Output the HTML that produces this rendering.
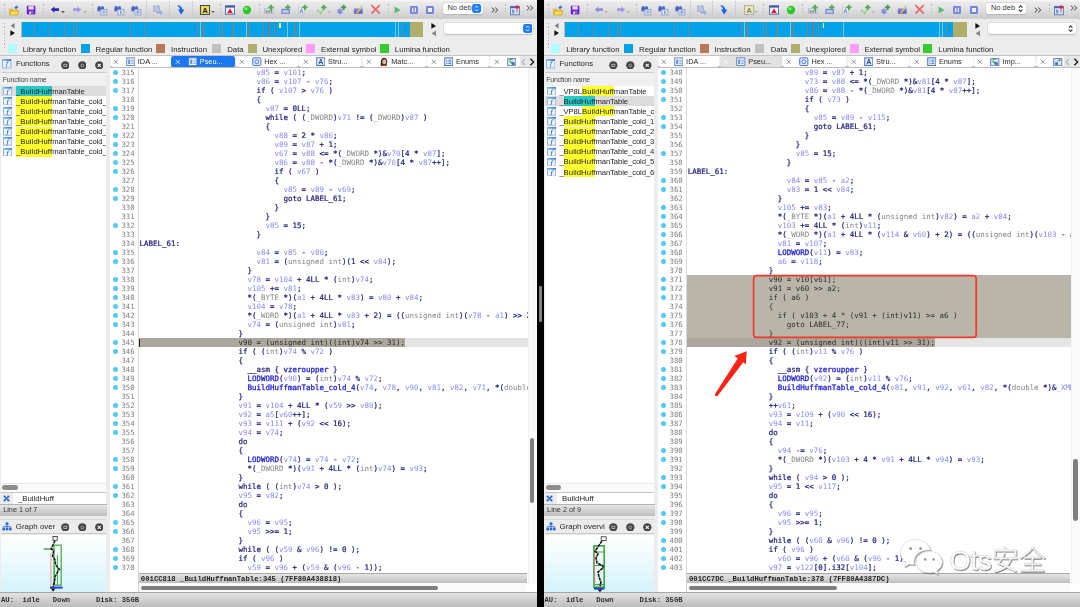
<!DOCTYPE html>
<html lang="en"><head><meta charset="utf-8"><title>IDA - BuildHuffmanTable diff</title>
<style>
*{box-sizing:border-box}
html,body{margin:0;padding:0}
html{background:#ececec}
body{width:1080px;height:607px;position:relative;overflow:hidden;background:#000;font-family:"Liberation Sans","Noto Sans CJK SC",sans-serif;-webkit-font-smoothing:antialiased}
.win{position:absolute;top:0;height:607px;overflow:hidden;background:#ececec}
.blur{filter:blur(.4px)}
.ab{position:absolute}
.ui,.lg,.fn,.tab{font-family:"Liberation Sans","Noto Sans CJK SC",sans-serif;white-space:nowrap}
.tbar{background:linear-gradient(#f7f7f7 0,#ebebeb 12%,#e3e3e3 40%,#d3d3d3 80%,#cbcbcb 94%,#d6d6d6 100%)}
.tri{width:0;height:0;border:2px solid transparent;border-top:2.4px solid #555;border-bottom:0}
.dd{background:#fff;border-radius:3px;box-shadow:0 0 0 .5px #d0d0d0,0 .6px 1px rgba(0,0,0,.25)}
.lg{font-size:7.8px;line-height:11px;color:#1e1e1e}
.fi{position:absolute;width:8.6px;height:8.2px;border:1px solid #5a8ae0;border-top:1.6px solid #3a70d8;background:#f4f8ff;overflow:hidden}
.fi.big{width:9.6px;height:9.6px}
.fi span{position:absolute;left:1.8px;top:-2.4px;font:italic 8px/10px "Liberation Serif",serif;color:#1a1a3a}
.fn{font-variant-ligatures:none;font-size:7.7px;line-height:10.1px;height:10.1px;color:#1c1c1c}
.fn{letter-spacing:-.1px}
.fn b{letter-spacing:.09px;font-weight:400;display:inline-block;height:10.1px;margin-top:-.5px;padding-top:.5px;vertical-align:top}
.tab{position:absolute;top:56px;height:10.9px;background:#fff;border-radius:2.5px;font-size:7.35px;line-height:10.8px;color:#2a2a2a}
.tab.act{background:#1b76f2;color:#fff}
.tab.dim{background:#e2e2e2;color:#2a2a2a}
.tab .tx{position:absolute;left:3.4px;top:2.9px;width:5.6px;height:5.6px}
.tab .tx path{stroke:#6e6e6e;stroke-width:.8;fill:none}
.tab.act .tx path,.tab.dim .tx path{stroke:#fff}
.tab .ti{position:absolute;left:16.4px;top:.7px;width:9.6px;height:9.4px}
.tab .tl{position:absolute;left:28.6px;top:1.1px}
pre{margin:0}
.ln{font:7.3px/9px "DejaVu Sans Mono","Liberation Mono",monospace;color:#7c7c7c}
.cd{font:7.475px/9px "DejaVu Sans Mono","Liberation Mono",monospace;color:#1c1c7c;font-weight:400;-webkit-text-stroke:.22px #1c1c7c}
.cd i{font-style:normal}
.cd .v{color:#8a8af4;-webkit-text-stroke:0}
.cd .t{color:#848484;-webkit-text-stroke:0}
.cd .f{color:#2222d8;-webkit-text-stroke:.3px #2222d8}
.cd .p{color:#2c2c2c;-webkit-text-stroke:0}
.dot{position:absolute;width:5.2px;height:5.2px;border-radius:50%;background:#50c8fa}
.st{font:700 7.27px/9px "Liberation Mono",monospace;color:#222;white-space:pre}
.sb{font:700 7.19px/10px "Liberation Mono",monospace;color:#303030}
.wm{position:absolute;left:0;top:0;width:1080px;height:607px;pointer-events:none}
</style></head>
<body>
<svg width="0" height="0" style="position:absolute"><defs><linearGradient id="fg" x1="0" x2="1" y1="0" y2="0"><stop offset="0" stop-color="#5cc4f6"/><stop offset="1" stop-color="#3a5ede"/></linearGradient></defs></svg>
<div class="win" style="left:0.0px;width:536.7px"><div class="blur ab" style="left:-4px;top:-4px;width:544.7px;height:615px"><div class="ab" style="left:4px;top:4px;width:536.7px;height:607px"><div class="ab tbar" style="left:0;top:0;width:100%;height:19px"></div><div class="ab" style="left:4.0px;top:4.4px;width:1.1px;height:1.3px;background:#b0b0b0"></div><div class="ab" style="left:4.0px;top:7.8px;width:1.1px;height:1.3px;background:#b0b0b0"></div><div class="ab" style="left:4.0px;top:11.2px;width:1.1px;height:1.3px;background:#b0b0b0"></div><div class="ab" style="left:43.0px;top:4.4px;width:1.1px;height:1.3px;background:#b0b0b0"></div><div class="ab" style="left:43.0px;top:7.8px;width:1.1px;height:1.3px;background:#b0b0b0"></div><div class="ab" style="left:43.0px;top:11.2px;width:1.1px;height:1.3px;background:#b0b0b0"></div><div class="ab" style="left:92.0px;top:4.4px;width:1.1px;height:1.3px;background:#b0b0b0"></div><div class="ab" style="left:92.0px;top:7.8px;width:1.1px;height:1.3px;background:#b0b0b0"></div><div class="ab" style="left:92.0px;top:11.2px;width:1.1px;height:1.3px;background:#b0b0b0"></div><div class="ab" style="left:219.5px;top:4.4px;width:1.1px;height:1.3px;background:#b0b0b0"></div><div class="ab" style="left:219.5px;top:7.8px;width:1.1px;height:1.3px;background:#b0b0b0"></div><div class="ab" style="left:219.5px;top:11.2px;width:1.1px;height:1.3px;background:#b0b0b0"></div><div class="ab" style="left:258.5px;top:4.4px;width:1.1px;height:1.3px;background:#b0b0b0"></div><div class="ab" style="left:258.5px;top:7.8px;width:1.1px;height:1.3px;background:#b0b0b0"></div><div class="ab" style="left:258.5px;top:11.2px;width:1.1px;height:1.3px;background:#b0b0b0"></div><div class="ab" style="left:387.5px;top:4.4px;width:1.1px;height:1.3px;background:#b0b0b0"></div><div class="ab" style="left:387.5px;top:7.8px;width:1.1px;height:1.3px;background:#b0b0b0"></div><div class="ab" style="left:387.5px;top:11.2px;width:1.1px;height:1.3px;background:#b0b0b0"></div><div class="ab" style="left:505.0px;top:4.4px;width:1.1px;height:1.3px;background:#b0b0b0"></div><div class="ab" style="left:505.0px;top:7.8px;width:1.1px;height:1.3px;background:#b0b0b0"></div><div class="ab" style="left:505.0px;top:11.2px;width:1.1px;height:1.3px;background:#b0b0b0"></div><div class="ab" style="left:146.4px;top:1.2px;width:1px;height:15.6px;background:repeating-linear-gradient(#c2c2c2 0 1.1px,transparent 1.1px 2.2px)"></div><div class="ab" style="left:168.8px;top:1.2px;width:1px;height:15.6px;background:repeating-linear-gradient(#c2c2c2 0 1.1px,transparent 1.1px 2.2px)"></div><div class="ab" style="left:191.6px;top:1.2px;width:1px;height:15.6px;background:repeating-linear-gradient(#c2c2c2 0 1.1px,transparent 1.1px 2.2px)"></div><svg class="ab" style="left:8.0px;top:4.0px" width="12" height="12" viewBox="0 0 12 12"><path d="M1.5 5.2h3l1 1h4.8v4.6h-8.8z" fill="#f0c030" stroke="#c89a10" stroke-width=".5"/><path d="M6 3.5l3-2 1.5 1.8-2.5 2z" fill="#4a78c8"/><path d="M1.5 10.8l1.6-3.6h8l-1.5 3.6z" fill="#ffdc50" stroke="#d0a010" stroke-width=".4"/></svg><svg class="ab" style="left:25.0px;top:4.0px" width="12" height="12" viewBox="0 0 12 12"><rect x="1.8" y="1.8" width="8.6" height="8.6" rx=".8" fill="#6a1ed0"/><rect x="3.4" y="2.2" width="5.4" height="3.4" fill="#e8d8ff"/><rect x="4" y="7.4" width="4.2" height="3" fill="#d0c0f0"/><rect x="6.4" y="7.9" width="1.2" height="2.1" fill="#5018a8"/></svg><svg class="ab" style="left:49.0px;top:4.0px" width="12" height="12" viewBox="0 0 12 12"><path d="M1.8 5.600l3.600-3.200v1.900h4.600v2.600h-4.600v1.900z" fill="#2a2ab8"/></svg><svg class="ab" style="left:71.0px;top:4.0px" width="12" height="12" viewBox="0 0 12 12"><path d="M10.2 5.600l-3.600-3.200v1.900h-4.600v2.600h4.600v1.900z" fill="#9a9ae8"/></svg><div class="ab tri" style="left:60.5px;top:11px;border-top-color:#555"></div><div class="ab tri" style="left:82.5px;top:11px;border-top-color:#b0b0b0"></div><svg class="ab" style="left:96.0px;top:4.0px" width="12" height="12" viewBox="0 0 12 12"><path d="M1.400 7.200V4.200Q1.400 2 3 2T4.600 3.400L5 3.400Q5.200 2 6.600 2T8 4.200V7.200H5.400V5.600H4.200V7.200Z" fill="#3f60c4"/><path d="M2 3.600Q2.200 2.600 3 2.600M5.800 3.600Q6 2.600 6.800 2.600" stroke="#8fb0f0" stroke-width=".7" fill="none"/><rect x="4.900" y="5.300" width="6" height="5.700" fill="#dde6f4" stroke="#7892c4" stroke-width=".7"/><path d="M6.400 7.300h3M6.400 8.900h3" stroke="#5a78b8" stroke-width=".7"/></svg><svg class="ab" style="left:113.0px;top:4.0px" width="12" height="12" viewBox="0 0 12 12"><path d="M1.400 7.200V4.200Q1.400 2 3 2T4.600 3.400L5 3.400Q5.200 2 6.600 2T8 4.200V7.200H5.400V5.600H4.200V7.200Z" fill="#3f60c4"/><path d="M2 3.600Q2.200 2.600 3 2.600M5.800 3.600Q6 2.600 6.800 2.600" stroke="#8fb0f0" stroke-width=".7" fill="none"/><rect x="4.900" y="5.300" width="6" height="5.700" fill="#dde6f4" stroke="#7892c4" stroke-width=".7"/><path d="M7.900 6.600v3.200" stroke="#4a68b0" stroke-width="1"/></svg><svg class="ab" style="left:130.0px;top:4.0px" width="12" height="12" viewBox="0 0 12 12"><path d="M1.400 7.200V4.200Q1.400 2 3 2T4.600 3.400L5 3.400Q5.200 2 6.600 2T8 4.200V7.200H5.400V5.600H4.200V7.200Z" fill="#3f60c4"/><path d="M2 3.600Q2.200 2.600 3 2.600M5.800 3.600Q6 2.600 6.800 2.600" stroke="#8fb0f0" stroke-width=".7" fill="none"/><rect x="4.900" y="5.300" width="6" height="5.700" fill="#dde6f4" stroke="#7892c4" stroke-width=".7"/><path d="M6.200 7.300h3.400M6.200 8.900h3.400M7.900 6.400v3.400" stroke="#5a78b8" stroke-width=".6"/></svg><svg class="ab" style="left:152.0px;top:4.0px" width="12" height="12" viewBox="0 0 12 12"><rect x="1.6" y="2" width="6" height="5.4" fill="#b8c4e0" stroke="#90a0c8" stroke-width=".6"/><path d="M4.6 7.8h3.6v-1.7l2.6 2.6-2.6 2.6v-1.7h-3.6z" fill="#9aa8d8"/></svg><svg class="ab" style="left:174.5px;top:4.0px" width="12" height="12" viewBox="0 0 12 12"><path d="M2.800 1.200Q6.800 1 7.200 5.600H9.400L6.200 10.400 3 5.600H5Q5 3 2.800 2.400Z" fill="#1464f2"/><path d="M3.200 1.600Q5.600 1.600 6.400 3.400" stroke="#5cc8f8" stroke-width=".8" fill="none"/></svg><svg class="ab" style="left:199.0px;top:4.0px" width="12" height="12" viewBox="0 0 12 12"><rect x="1.4" y="1.6" width="9.2" height="8.8" fill="#f0e040" stroke="#2a2a60" stroke-width=".9"/><text x="6" y="9" font-family="Liberation Sans,sans-serif" font-size="7.6" font-weight="700" text-anchor="middle" fill="#181860">A</text></svg><div class="ab tri" style="left:210.5px;top:11px;border-top-color:#666"></div><svg class="ab" style="left:224.0px;top:4.0px" width="12" height="12" viewBox="0 0 12 12"><rect x="1.4" y="1.8" width="9.2" height="8.4" fill="#f4f4ff" stroke="#3a58b0" stroke-width=".8"/><rect x="1.4" y="1.8" width="9.2" height="1.8" fill="#3a58b0"/><path d="M6 4.4l3 4.8h-6z" fill="#e02020"/></svg><svg class="ab" style="left:241.0px;top:4.0px" width="12" height="12" viewBox="0 0 12 12"><circle cx="6" cy="6" r="4.2" fill="#2ec82e"/><circle cx="4.9" cy="4.7" r="1.6" fill="#9af09a" opacity=".8"/></svg><svg class="ab" style="left:260px;top:0" width="145" height="19" viewBox="260 0 145 19"><rect x="264.8" y="8.6" width="8.200" height="5.200" fill="#e4e8ec" stroke="#9aa4b0" stroke-width=".5"/><path d="M266.200 10v3M268 10v3M269.800 10v3M271.600 10v3" stroke="#56606c" stroke-width=".8"/><path d="M271.0 4.7v5.400M268.3 7.4h5.400" stroke="#55a755" stroke-width="1.9"/><rect x="281.2" y="8.8" width="8.800" height="5.200" rx=".6" fill="#7c8cdc"/><rect x="282.6" y="10.2" width="6" height="2.600" fill="#c4ccf4"/><path d="M287.8 4.7v5.400M285.1 7.4h5.400" stroke="#55a755" stroke-width="1.9"/><rect x="298.4" y="7.2" width="6" height="6.600" fill="#eef0f8" stroke="#b4b8cc" stroke-width=".5"/><path d="M299.800 13l1.600-4.200 1.600 4.200M300.400 11.600h2" fill="none" stroke="#5a78c0" stroke-width=".8"/><path d="M304.8 4.7v5.400M302.1 7.4h5.400" stroke="#55a755" stroke-width="1.9"/><path d="M317.400 10.600l3 2.400 3-3.400M320.400 13l.4 1.200" fill="none" stroke="#9ccc8c" stroke-width="1.200"/><circle cx="317.600" cy="10.600" r="1" fill="#9ccc8c"/><circle cx="320.600" cy="13.200" r="1.100" fill="#9ccc8c"/><path d="M323.8 4.7v5.400M321.1 7.4h5.400" stroke="#55a755" stroke-width="1.9"/><path d="M340 7.600l1 2.100 2.300-.2-1.300 1.900 1.300 1.900-2.300-.2-1 2.100-1-2.100-2.300.2 1.300-1.900-1.300-1.900 2.300.2z" fill="#8c88e4"/><path d="M343.6 4.7v5.400M340.9 7.4h5.400" stroke="#459a4c" stroke-width="1.9"/><rect x="353.8" y="8.4" width="9" height="5.600" rx=".6" fill="#7480d4"/><rect x="355" y="11.4" width="6.600" height="1.800" fill="#5a64c0"/><path d="M356.400 12.200l4.600-6 1.300 1-4.600 6-1.700.6z" fill="#f0bc58"/><path d="M361 6.200l.8-1 1.300 1-.8 1z" fill="#8ad0e8"/><path d="M371.400 5.200l8.400 8.400M379.800 5.200l-8.400 8.400" stroke="#e26a6a" stroke-width="1.700"/><path d="M394.600 6.400l6 3.500-6 3.500z" fill="#5cba70"/></svg><div class="ab tri" style="left:327.400px;top:11px;border-top-color:#b4b4b4"></div><svg class="ab" style="left:407.5px;top:4.0px" width="12" height="12" viewBox="0 0 12 12"><rect x="2" y="2" width="8" height="8" rx="1.2" fill="#7686e0"/><rect x="4" y="3.800" width="1.300" height="4.400" fill="#e8ecff"/><rect x="6.700" y="3.800" width="1.300" height="4.400" fill="#e8ecff"/></svg><svg class="ab" style="left:424.0px;top:4.0px" width="12" height="12" viewBox="0 0 12 12"><rect x="2" y="2" width="8" height="8" rx="1.2" fill="#7686e0"/><rect x="4" y="4" width="4" height="4" fill="#eef0ff"/></svg><div class="ab dd" style="left:442.8px;top:3.3px;width:39.8px;height:10.6px"><span style="position:absolute;left:4.6px;top:0;line-height:10.8px;font-size:7.5px;color:#3a3a3a">No deb</span><svg class="ab" style="left:29.6px;top:0.8px" width="9.2" height="9.0" viewBox="0 0 10 10"><rect width="10" height="10" rx="2.4" fill="#1a7af8"/><path d="M3.2 4L5 2.2 6.8 4M3.2 6L5 7.8 6.8 6" fill="none" stroke="#fff" stroke-width="1.1"/></svg></div><svg class="ab" style="left:490.6px;top:6.6px" width="8" height="6" viewBox="0 0 8 6"><path d="M.8.600L3.400 3 .8 5.400M4.200.6L6.800 3 4.200 5.400" fill="none" stroke="#3c3c3c" stroke-width="1"/></svg><svg class="ab" style="left:526.2px;top:4.8px" width="8" height="6" viewBox="0 0 8 6"><path d="M.8.600L3.400 3 .8 5.400M4.200.6L6.800 3 4.200 5.400" fill="none" stroke="#3c3c3c" stroke-width="1"/></svg><svg class="ab" style="left:509.0px;top:4.0px" width="12" height="12" viewBox="0 0 12 12"><rect x="1.4" y="2.4" width="9" height="8.4" fill="#dce6fa" stroke="#4a68b8" stroke-width=".8"/><rect x="1.4" y="2.4" width="9" height="1.8" fill="#4a68b8"/><rect x="3" y="5.6" width="2.4" height="3.8" fill="#7a94d8"/><circle cx="8" cy="3" r="1.7" fill="#e02828"/><path d="M8 4.6v4" stroke="#e02828" stroke-width=".8"/></svg><div class="ab" style="left:4px;top:23px;width:1.1px;height:27px;background:repeating-linear-gradient(#b0b0b0 0 1.3px,transparent 1.3px 3.4px)"></div><div class="ab" style="left:10px;top:23px;font-size:0"><svg width="6" height="14" viewBox="0 0 6 14"><path d="M4.600 0v5.600L.4 2.800z" fill="#858585"/><path d="M.4 7.200v5.800L5 10.100z" fill="#111"/></svg></div><div class="ab" style="left:21.8px;top:21.9px;width:401.4px;height:14.8px;background:#00a2e8;overflow:hidden"><div class="ab" style="left:12.4px;top:0;width:0.8px;height:14.8px;background:#6a8a98"></div><div class="ab" style="left:27.7px;top:0;width:0.8px;height:14.8px;background:#6a8a98"></div><div class="ab" style="left:42.4px;top:0;width:0.8px;height:14.8px;background:#6a8a98"></div><div class="ab" style="left:51.0px;top:0;width:0.8px;height:14.8px;background:#6a8a98"></div><div class="ab" style="left:54.4px;top:0;width:0.8px;height:14.8px;background:#6a8a98"></div><div class="ab" style="left:109.4px;top:0;width:0.8px;height:14.8px;background:#6a8a98"></div><div class="ab" style="left:122.4px;top:0;width:0.8px;height:14.8px;background:#6a8a98"></div><div class="ab" style="left:175.0px;top:0;width:0.8px;height:14.8px;background:#6a8a98"></div><div class="ab" style="left:178.0px;top:0;width:0.8px;height:14.8px;background:#7ac8ec"></div><div class="ab" style="left:181.4px;top:0;width:1.0px;height:14.8px;background:#a87858"></div><div class="ab" style="left:196.8px;top:0;width:0.8px;height:14.8px;background:#6a8a98"></div><div class="ab" style="left:200.4px;top:0;width:0.8px;height:14.8px;background:#6a8a98"></div><div class="ab" style="left:211.6px;top:0;width:1.0px;height:14.8px;background:#a87858"></div><div class="ab" style="left:224.0px;top:0;width:0.8px;height:14.8px;background:#7ac8ec"></div><div class="ab" style="left:227.4px;top:0;width:1.0px;height:14.8px;background:#a87858"></div><div class="ab" style="left:241.4px;top:0;width:0.8px;height:14.8px;background:#6a8a98"></div><div class="ab" style="left:246.0px;top:0;width:1.0px;height:14.8px;background:#c06040"></div><div class="ab" style="left:252.4px;top:0;width:0.8px;height:14.8px;background:#6a8a98"></div><div class="ab" style="left:265.6px;top:0;width:0.8px;height:14.8px;background:#7ac8ec"></div><div class="ab" style="left:272.0px;top:0;width:0.8px;height:14.8px;background:#a87858"></div><div class="ab" style="left:277.6px;top:0;width:0.8px;height:14.8px;background:#7ac8ec"></div><div class="ab" style="left:373.0px;top:0;width:0.8px;height:14.8px;background:#7ac8ec"></div><div class="ab" style="left:376.0px;top:0;width:0.8px;height:14.8px;background:#7ac8ec"></div><div class="ab" style="left:379.8px;top:0;width:0.8px;height:14.8px;background:#6a8a98"></div><div class="ab" style="left:387.8px;top:0;width:13.6px;height:14.8px;background:#b0ae6a"></div><div class="ab" style="left:257.6px;top:1px;width:1.4px;height:5.6px;background:#f4f060"></div></div><div class="ab" style="left:20.8px;top:21.9px;width:1px;height:14.8px;background:#b8b8b8"></div><div class="ab" style="left:431px;top:23px;font-size:0"><svg width="6" height="14" viewBox="0 0 6 14"><path d="M.4 0v5.800l4.600-2.900z" fill="#111"/><path d="M5 7.600v5.600L.6 10.400z" fill="#858585"/></svg></div><div class="ab dd" style="left:444.4px;top:23.2px;width:88.4px;height:11.3px"><svg class="ab" style="left:78.4px;top:1.1px" width="9.2" height="9.0" viewBox="0 0 10 10"><rect width="10" height="10" rx="2.4" fill="#1a7af8"/><path d="M3.2 4L5 2.2 6.8 4M3.2 6L5 7.8 6.8 6" fill="none" stroke="#fff" stroke-width="1.1"/></svg></div><div class="ab" style="left:7.8px;top:44.4px;width:9.1px;height:8.9px;background:#aefcff"></div><div class="ab lg" style="left:22.7px;top:43.6px">Library function</div><div class="ab" style="left:80.8px;top:44.4px;width:9.1px;height:8.9px;background:#00a2e8"></div><div class="ab lg" style="left:95.6px;top:43.6px">Regular function</div><div class="ab" style="left:156.3px;top:44.4px;width:9.1px;height:8.9px;background:#b8785a"></div><div class="ab lg" style="left:171.0px;top:43.6px">Instruction</div><div class="ab" style="left:211.8px;top:44.4px;width:9.1px;height:8.9px;background:#c0c0c0"></div><div class="ab lg" style="left:227.2px;top:43.6px">Data</div><div class="ab" style="left:247.6px;top:44.4px;width:9.1px;height:8.9px;background:#b0ae6a"></div><div class="ab lg" style="left:262.4px;top:43.6px">Unexplored</div><div class="ab" style="left:306.0px;top:44.4px;width:9.1px;height:8.9px;background:#ff9cf8"></div><div class="ab lg" style="left:321.0px;top:43.6px">External symbol</div><div class="ab" style="left:379.8px;top:44.4px;width:9.1px;height:8.9px;background:#32cc32"></div><div class="ab lg" style="left:394.8px;top:43.6px">Lumina function</div><div class="ab" style="left:0;top:54.6px;width:100%;height:1px;background:#c4c4c4"></div><div class="ab" style="left:0;top:55.6px;width:106.2px;height:536.4px;background:#ececec"></div><div class="ab" style="left:1px;top:56px;width:105.2px;height:16px;background:#ebebeb"></div><svg class="ab" style="left:2.3px;top:59.3px" width="9.4" height="9.4" viewBox="0 0 10 10" preserveAspectRatio="none"><rect x=".5" y=".5" width="9" height="9" fill="#e6f6ff" stroke="#8fa8ee" stroke-width="1"/><rect x=".4" y=".2" width="9.200" height="1.700" fill="url(#fg)"/><text x="5.2" y="7.700" text-anchor="middle" font-family="DejaVu Serif,Liberation Serif,serif" font-style="italic" font-size="6.800" fill="#2c3858">f</text></svg><div class="ab ui" style="left:15.9px;top:58.3px;font-size:7.8px;line-height:11px;color:#262626">Functions</div><svg class="ab" style="left:60.7px;top:60.6px" width="8.6" height="8.6" viewBox="0 0 8 8"><circle cx="4" cy="4" r="3.85" fill="#444"/><rect x="2.6" y="3" width="2.8" height="2" fill="none" stroke="#c8c8c8" stroke-width=".7"/></svg><svg class="ab" style="left:77.7px;top:60.6px" width="8.6" height="8.6" viewBox="0 0 8 8"><circle cx="4" cy="4" r="3.85" fill="#444"/><circle cx="4" cy="4.2" r="1.3" fill="none" stroke="#c0c0c0" stroke-width=".7"/></svg><svg class="ab" style="left:94.7px;top:60.6px" width="8.6" height="8.6" viewBox="0 0 8 8"><circle cx="4" cy="4" r="3.85" fill="#444"/><path d="M2.6 2.6L5.4 5.4M5.4 2.6L2.6 5.4" stroke="#f4f4f4" stroke-width="1.1"/></svg><div class="ab" style="left:1px;top:72.4px;width:105.2px;height:13.6px;background:#f0f0f0;border-top:1.2px solid #cdcdcd"></div><div class="ab ui" style="left:2.8px;top:75px;font-size:7px;letter-spacing:-.2px;line-height:10px;color:#4a4a4a">Function name</div><div class="ab" style="left:1px;top:86px;width:105.2px;height:397px;background:#fff;overflow:hidden"><div class="ab" style="left:0;top:0.00px;width:100%;height:10.1px;background:#dcdcdc"></div><svg class="ab" style="left:2.2px;top:0.8px" width="9.2" height="8.6" viewBox="0 0 10 10" preserveAspectRatio="none"><rect x=".5" y=".5" width="9" height="9" fill="#e6f6ff" stroke="#8fa8ee" stroke-width="1"/><rect x=".4" y=".2" width="9.200" height="1.700" fill="url(#fg)"/><text x="5.2" y="7.700" text-anchor="middle" font-family="DejaVu Serif,Liberation Serif,serif" font-style="italic" font-size="6.800" fill="#2c3858">f</text></svg><div class="ab fn" style="left:14.9px;top:0.50px"><b style="background:#28c8c8">_BuildHuff</b>manTable</div><svg class="ab" style="left:2.2px;top:10.9px" width="9.2" height="8.6" viewBox="0 0 10 10" preserveAspectRatio="none"><rect x=".5" y=".5" width="9" height="9" fill="#e6f6ff" stroke="#8fa8ee" stroke-width="1"/><rect x=".4" y=".2" width="9.200" height="1.700" fill="url(#fg)"/><text x="5.2" y="7.700" text-anchor="middle" font-family="DejaVu Serif,Liberation Serif,serif" font-style="italic" font-size="6.800" fill="#2c3858">f</text></svg><div class="ab fn" style="left:14.9px;top:10.62px"><b style="background:#ffff30">_BuildHuff</b>manTable_cold_1</div><svg class="ab" style="left:2.2px;top:21.1px" width="9.2" height="8.6" viewBox="0 0 10 10" preserveAspectRatio="none"><rect x=".5" y=".5" width="9" height="9" fill="#e6f6ff" stroke="#8fa8ee" stroke-width="1"/><rect x=".4" y=".2" width="9.200" height="1.700" fill="url(#fg)"/><text x="5.2" y="7.700" text-anchor="middle" font-family="DejaVu Serif,Liberation Serif,serif" font-style="italic" font-size="6.800" fill="#2c3858">f</text></svg><div class="ab fn" style="left:14.9px;top:20.75px"><b style="background:#ffff30">_BuildHuff</b>manTable_cold_2</div><svg class="ab" style="left:2.2px;top:31.2px" width="9.2" height="8.6" viewBox="0 0 10 10" preserveAspectRatio="none"><rect x=".5" y=".5" width="9" height="9" fill="#e6f6ff" stroke="#8fa8ee" stroke-width="1"/><rect x=".4" y=".2" width="9.200" height="1.700" fill="url(#fg)"/><text x="5.2" y="7.700" text-anchor="middle" font-family="DejaVu Serif,Liberation Serif,serif" font-style="italic" font-size="6.800" fill="#2c3858">f</text></svg><div class="ab fn" style="left:14.9px;top:30.88px"><b style="background:#ffff30">_BuildHuff</b>manTable_cold_3</div><svg class="ab" style="left:2.2px;top:41.3px" width="9.2" height="8.6" viewBox="0 0 10 10" preserveAspectRatio="none"><rect x=".5" y=".5" width="9" height="9" fill="#e6f6ff" stroke="#8fa8ee" stroke-width="1"/><rect x=".4" y=".2" width="9.200" height="1.700" fill="url(#fg)"/><text x="5.2" y="7.700" text-anchor="middle" font-family="DejaVu Serif,Liberation Serif,serif" font-style="italic" font-size="6.800" fill="#2c3858">f</text></svg><div class="ab fn" style="left:14.9px;top:41.00px"><b style="background:#ffff30">_BuildHuff</b>manTable_cold_4</div><svg class="ab" style="left:2.2px;top:51.4px" width="9.2" height="8.6" viewBox="0 0 10 10" preserveAspectRatio="none"><rect x=".5" y=".5" width="9" height="9" fill="#e6f6ff" stroke="#8fa8ee" stroke-width="1"/><rect x=".4" y=".2" width="9.200" height="1.700" fill="url(#fg)"/><text x="5.2" y="7.700" text-anchor="middle" font-family="DejaVu Serif,Liberation Serif,serif" font-style="italic" font-size="6.800" fill="#2c3858">f</text></svg><div class="ab fn" style="left:14.9px;top:51.12px"><b style="background:#ffff30">_BuildHuff</b>manTable_cold_5</div><svg class="ab" style="left:2.2px;top:61.5px" width="9.2" height="8.6" viewBox="0 0 10 10" preserveAspectRatio="none"><rect x=".5" y=".5" width="9" height="9" fill="#e6f6ff" stroke="#8fa8ee" stroke-width="1"/><rect x=".4" y=".2" width="9.200" height="1.700" fill="url(#fg)"/><text x="5.2" y="7.700" text-anchor="middle" font-family="DejaVu Serif,Liberation Serif,serif" font-style="italic" font-size="6.800" fill="#2c3858">f</text></svg><div class="ab fn" style="left:14.9px;top:61.25px"><b style="background:#ffff30">_BuildHuff</b>manTable_cold_6</div></div><div class="ab" style="left:1px;top:483px;width:105.2px;height:8.6px;background:#fafafa;border-top:1px solid #e8e8e8"></div><div class="ab" style="left:2.4px;top:485.4px;width:15.6px;height:4.6px;border-radius:2.3px;background:#8e8e8e"></div><div class="ab" style="left:1px;top:491.8px;width:105.2px;height:12.4px;background:#ececec;border-top:1px solid #c4c4c4"></div><svg class="ab" style="left:2.6px;top:494.8px" width="7" height="7" viewBox="0 0 8 8"><path d="M2 2l4 4M6 2L2 6" stroke="#2a6ae0" stroke-width="1.600"/><circle cx="1.800" cy="1.800" r="1.300" fill="#2a6ae0"/><circle cx="6.200" cy="1.800" r="1.300" fill="#2a6ae0"/><circle cx="1.800" cy="6.200" r="1.300" fill="#2a6ae0"/><circle cx="6.200" cy="6.200" r="1.300" fill="#2a6ae0"/></svg><div class="ab" style="left:13.4px;top:493px;width:92.8px;height:10.6px;background:#fff"></div><div class="ab ui" style="left:18.0px;top:493.6px;font-size:7.8px;line-height:10px;color:#222">_BuildHuff</div><div class="ab" style="left:0;top:504.4px;width:107.2px;height:11.6px;background:linear-gradient(#e6e6e6,#bebebe);border-top:1px solid #b4b4b4"></div><div class="ab ui" style="left:3.2px;top:505.2px;font-size:7.3px;line-height:10px;color:#333">Line 1 of 7</div><div class="ab" style="left:1px;top:518.6px;width:105.2px;height:15.2px;background:#ebebeb;border-bottom:1px solid #c8c8c8;border-top:1px solid #d8d8d8"></div><svg class="ab" style="left:2.2px;top:521.6px" width="10" height="9" viewBox="0 0 10 9"><rect x="3.6" y=".4" width="2.8" height="2.6" fill="#2a6ae0"/><rect x=".4" y="5.6" width="2.6" height="2.8" fill="#2a6ae0"/><rect x="3.7" y="5.6" width="2.6" height="2.8" fill="#2a6ae0"/><rect x="7" y="5.6" width="2.6" height="2.8" fill="#2a6ae0"/><path d="M5 3v1.4M1.7 5.6V4.4h6.6v1.2M5 4.4v1.2" stroke="#2a6ae0" stroke-width=".8" fill="none"/></svg><div class="ab ui" style="left:15.8px;top:520.8px;width:39.5px;overflow:hidden;white-space:nowrap;font-size:7.9px;line-height:11px;color:#262626">Graph overview</div><svg class="ab" style="left:60.7px;top:522.7px" width="8.6" height="8.6" viewBox="0 0 8 8"><circle cx="4" cy="4" r="3.85" fill="#444"/><rect x="2.6" y="3" width="2.8" height="2" fill="none" stroke="#c8c8c8" stroke-width=".7"/></svg><svg class="ab" style="left:77.7px;top:522.7px" width="8.6" height="8.6" viewBox="0 0 8 8"><circle cx="4" cy="4" r="3.85" fill="#444"/><circle cx="4" cy="4.2" r="1.3" fill="none" stroke="#c0c0c0" stroke-width=".7"/></svg><svg class="ab" style="left:94.7px;top:522.7px" width="8.6" height="8.6" viewBox="0 0 8 8"><circle cx="4" cy="4" r="3.85" fill="#444"/><path d="M2.6 2.6L5.4 5.4M5.4 2.6L2.6 5.4" stroke="#f4f4f4" stroke-width="1.1"/></svg><div class="ab" style="left:1px;top:534.8px;width:105.2px;height:57.2px;background:linear-gradient(#ffffff,#d4f3fc)"></div><svg class="ab" style="left:30px;top:530px" width="60" height="62" viewBox="30 530 60 62"><rect x="54" y="545.2" width="7.2" height="40" fill="none" stroke="#4cac4c" stroke-width="1.3"/><path d="M57.4 555v30M54.600 567v18" stroke="#4cac4c" stroke-width="1"/><path d="M43.6 549h10" stroke="#4cac4c" stroke-width="1.5"/><path d="M50.9 553.400v33" stroke="#ee8080" stroke-width=".8"/><path d="M55 540.6l-3.800 8.200 2.400 2.200-1 5 2.400 4 .6 5 3.800 4-2.400 4-2 4-.6 5-1.400 5" fill="none" stroke="#141414" stroke-width="1.5" stroke-dasharray="3.2 .7"/><rect x="53" y="536.5" width="4.200" height="3.800" fill="#fff" stroke="#2a2a2a" stroke-width=".8"/><path d="M50 587.600h12.600" stroke="#2a36e4" stroke-width="2"/><path d="M50.800 588.600h4.600l-2.300 3.200z" fill="#0c0c0c"/></svg><div class="ab" style="left:109.6px;top:55.6px;width:427.1px;height:536.4px;background:#fff"></div><div class="ab" style="left:109.6px;top:55.6px;width:427.1px;height:11.8px;background:#f1f1f1;border-bottom:1px solid #bdbdbd"></div><div class="ab" style="left:520.4px;top:55.6px;width:16.5px;height:11.4px;background:#e7e7e7"></div><div class="tab" style="left:110.8px;width:59.8px"><div class="ab" style="left:-1.6px;top:0"><svg class="tx" viewBox="0 0 6 6"><path d="M.8.8l4.400 4.400M5.200.8L.8 5.200"/></svg><svg class="ti" width="9" height="9" viewBox="0 0 9 9"><rect x=".6" y=".8" width="7.8" height="7.4" fill="#eef4ff" stroke="#4a78c8" stroke-width=".8"/><rect x="2" y="2.4" width="2" height="4.4" fill="#6a90d8"/><path d="M5 3h2.4M5 4.6h2.4M5 6.2h2.4" stroke="#6a90d8" stroke-width=".7"/></svg><span class="tl">IDA ...</span></div></div><div class="tab act" style="left:171.2px;width:63.4px"><div class="ab" style="left:0.0px;top:0"><svg class="tx" viewBox="0 0 6 6"><path d="M.8.8l4.400 4.400M5.200.8L.8 5.200"/></svg><svg class="ti" width="9" height="9" viewBox="0 0 9 9"><rect x=".6" y=".8" width="7.8" height="7.4" fill="#eef4ff" stroke="#4a78c8" stroke-width=".8"/><rect x="2" y="2.4" width="2" height="4.4" fill="#6a90d8"/><path d="M5 3h2.4M5 4.6h2.4M5 6.2h2.4" stroke="#6a90d8" stroke-width=".7"/></svg><span class="tl">Pseu...</span></div></div><div class="tab" style="left:235.6px;width:62.6px"><div class="ab" style="left:0.0px;top:0"><svg class="tx" viewBox="0 0 6 6"><path d="M.8.8l4.400 4.400M5.200.8L.8 5.200"/></svg><svg class="ti" width="9" height="9" viewBox="0 0 9 9"><rect x=".6" y=".8" width="7.8" height="7.4" rx="1" fill="#e4ecff" stroke="#3a68d8" stroke-width=".9"/><circle cx="4.5" cy="4.5" r="1.9" fill="none" stroke="#3a68d8" stroke-width=".8"/></svg><span class="tl">Hex ...</span></div></div><div class="tab" style="left:299.4px;width:62.0px"><div class="ab" style="left:0.0px;top:0"><svg class="tx" viewBox="0 0 6 6"><path d="M.8.8l4.400 4.400M5.200.8L.8 5.200"/></svg><svg class="ti" width="9" height="9" viewBox="0 0 9 9"><rect x=".6" y=".8" width="7.8" height="7.4" fill="#e8f0ff" stroke="#3a68c8" stroke-width=".9"/><path d="M2.6 7l1.9-5 1.9 5M3.3 5.4h2.4" fill="none" stroke="#2a3a80" stroke-width=".9"/></svg><span class="tl">Stru...</span></div></div><div class="tab" style="left:362.6px;width:63.6px"><div class="ab" style="left:0.0px;top:0"><svg class="tx" viewBox="0 0 6 6"><path d="M.8.8l4.400 4.400M5.200.8L.8 5.200"/></svg><svg class="ti" width="9" height="9" viewBox="0 0 9 9"><path d="M1.6 9V5.4C1.6 2.6 3 .8 4.8.8s3 1.6 3 4L7 9z" fill="#3a2a24"/><ellipse cx="5" cy="4.6" rx="1.9" ry="2.4" fill="#e8b8a0"/><path d="M3 7.4h4V9H3z" fill="#c03030"/></svg><span class="tl">Matc...</span></div></div><div class="tab" style="left:427.4px;width:61.8px"><div class="ab" style="left:0.0px;top:0"><svg class="tx" viewBox="0 0 6 6"><path d="M.8.8l4.400 4.400M5.200.8L.8 5.200"/></svg><svg class="ti" width="9" height="9" viewBox="0 0 9 9"><rect x=".6" y=".8" width="7.8" height="7.4" fill="#e8f0ff" stroke="#3a68c8" stroke-width=".9"/><path d="M2.2 3h1M4.2 3h2.6M2.2 4.6h1M4.2 4.6h2.6M2.2 6.2h1M4.2 6.2h2.6" stroke="#3a68c8" stroke-width=".8"/></svg><span class="tl">Enums</span></div></div><div class="tab" style="left:490.4px;width:30.0px"><div class="ab" style="left:0.0px;top:0"><svg class="tx" viewBox="0 0 6 6"><path d="M.8.8l4.400 4.400M5.200.8L.8 5.200"/></svg><svg class="ti" width="9" height="9" viewBox="0 0 9 9"><rect x=".6" y="1.6" width="7.8" height="6.8" fill="#dce6fa" stroke="#4a68b8" stroke-width=".8"/><path d="M2 2.6h3.4L4 .8z" fill="#38a838"/><path d="M2.4 3.4l2 2.4 1-1" stroke="#38a838" stroke-width="1.1" fill="none"/><rect x="4.6" y="5" width="2.6" height="2.6" fill="#4a68b8"/></svg><span class="tl"></span></div></div><div class="ab" style="left:110.2px;top:66.9px;width:426.5px;height:1.1px;background:#bcbcbc"></div><svg class="ab" style="left:520.2px;top:58px" width="16" height="8" viewBox="0 0 16 8"><path d="M5 1L2 4l3 3" fill="none" stroke="#b0b0b0" stroke-width="1.1"/><path d="M10.4 .8L13.6 4l-3.2 3.2" fill="none" stroke="#1a1a1a" stroke-width="1.4"/></svg><div class="ab" style="left:109.6px;top:67.6px;width:418.5px;height:505.4px;overflow:hidden"><div class="ab" style="left:28.0px;top:0;width:1.4px;height:100%;background:#dadada"></div><div class="ab" style="left:29.4px;top:270.8px;width:265.8px;height:8.8px;background:#aca79c"></div><div class="ab" style="left:295.2px;top:270.8px;width:123.2px;height:8.8px;background:#e4e4e4"></div><div class="ab" style="left:29.2px;top:271.0px;width:1.1px;height:8.4px;background:#1a1a1a"></div><pre class="ab ln" style="left:11.8px;top:0.3px">315
316
317
318
319
320
321
322
323
324
325
326
327
328
329
330
331
332
333
334
335
336
337
338
339
340
341
342
343
344
345
346
347
348
349
350
351
352
353
354
355
356
357
358
359
360
361
362
363
364
365
366
367
368
369
370</pre><div class="dot" style="left:3.2px;top:2.3px"></div><div class="dot" style="left:3.2px;top:11.3px"></div><div class="dot" style="left:3.2px;top:20.3px"></div><div class="dot" style="left:3.2px;top:38.3px"></div><div class="dot" style="left:3.2px;top:47.3px"></div><div class="dot" style="left:3.2px;top:65.3px"></div><div class="dot" style="left:3.2px;top:74.3px"></div><div class="dot" style="left:3.2px;top:83.3px"></div><div class="dot" style="left:3.2px;top:92.3px"></div><div class="dot" style="left:3.2px;top:101.3px"></div><div class="dot" style="left:3.2px;top:119.3px"></div><div class="dot" style="left:3.2px;top:128.3px"></div><div class="dot" style="left:3.2px;top:155.3px"></div><div class="dot" style="left:3.2px;top:182.3px"></div><div class="dot" style="left:3.2px;top:191.3px"></div><div class="dot" style="left:3.2px;top:209.3px"></div><div class="dot" style="left:3.2px;top:218.3px"></div><div class="dot" style="left:3.2px;top:227.3px"></div><div class="dot" style="left:3.2px;top:236.3px"></div><div class="dot" style="left:3.2px;top:245.3px"></div><div class="dot" style="left:3.2px;top:254.3px"></div><div class="dot" style="left:3.2px;top:272.3px"></div><div class="dot" style="left:3.2px;top:281.3px"></div><div class="dot" style="left:3.2px;top:299.3px"></div><div class="dot" style="left:3.2px;top:308.3px"></div><div class="dot" style="left:3.2px;top:317.3px"></div><div class="dot" style="left:3.2px;top:335.3px"></div><div class="dot" style="left:3.2px;top:344.3px"></div><div class="dot" style="left:3.2px;top:353.3px"></div><div class="dot" style="left:3.2px;top:362.3px"></div><div class="dot" style="left:3.2px;top:389.3px"></div><div class="dot" style="left:3.2px;top:398.3px"></div><div class="dot" style="left:3.2px;top:416.3px"></div><div class="dot" style="left:3.2px;top:425.3px"></div><div class="dot" style="left:3.2px;top:452.3px"></div><div class="dot" style="left:3.2px;top:461.3px"></div><div class="dot" style="left:3.2px;top:479.3px"></div><div class="dot" style="left:3.2px;top:488.3px"></div><div class="dot" style="left:3.2px;top:497.3px"></div><pre class="ab cd" style="left:30.0px;top:0.3px">                          <i class="v">v85</i> = <i class="v">v101</i>;
                          <i class="v">v86</i> = <i class="v">v107</i> - <i class="v">v76</i>;
                          if ( <i class="v">v107</i> &gt; <i class="v">v76</i> )
                          {
                            <i class="v">v87</i> = 0LL;
                            while ( (<i class="t">_DWORD</i>)<i class="v">v71</i> != (<i class="t">_DWORD</i>)<i class="v">v87</i> )
                            {
                              <i class="v">v88</i> = 2 * <i class="v">v86</i>;
                              <i class="v">v89</i> = <i class="v">v87</i> + 1;
                              <i class="v">v67</i> = <i class="v">v88</i> &lt;= *(<i class="t">_DWORD</i> *)&amp;<i class="v">v70</i>[4 * <i class="v">v87</i>];
                              <i class="v">v86</i> = <i class="v">v88</i> - *(<i class="t">_DWORD</i> *)&amp;<i class="v">v70</i>[4 * <i class="v">v87</i>++];
                              if ( <i class="v">v67</i> )
                              {
                                <i class="v">v85</i> = <i class="v">v89</i> - <i class="v">v69</i>;
                                goto LABEL_61;
                              }
                            }
                            <i class="v">v85</i> = 15;
                          }
LABEL_61:
                          <i class="v">v84</i> = <i class="v">v85</i> - <i class="v">v80</i>;
                          <i class="v">v81</i> = (<i class="t">unsigned int</i>)(1 &lt;&lt; <i class="v">v84</i>);
                        }
                        <i class="v">v78</i> = <i class="v">v104</i> + 4LL * (<i class="t">int</i>)<i class="v">v74</i>;
                        <i class="v">v105</i> += <i class="v">v81</i>;
                        *(<i class="t">_BYTE</i> *)(<i class="v">a1</i> + 4LL * <i class="v">v83</i>) = <i class="v">v80</i> + <i class="v">v84</i>;
                        <i class="v">v104</i> = <i class="v">v78</i>;
                        *(<i class="t">_WORD</i> *)(<i class="v">a1</i> + 4LL * <i class="v">v83</i> + 2) = ((<i class="t">unsigned int</i>)(<i class="v">v78</i> - <i class="v">a1</i>) &gt;&gt; 2
                        <i class="v">v74</i> = (<i class="t">unsigned int</i>)<i class="v">v81</i>;
                      }
<i class="p">                      v90 = (unsigned int)((int)v74 &gt;&gt; 31);</i>
                      if ( (<i class="t">int</i>)<i class="v">v74</i> % <i class="v">v72</i> )
                      {
                        __asm { <i class="f">vzeroupper</i> }
                        <i class="f">LODWORD</i>(<i class="v">v90</i>) = (<i class="t">int</i>)<i class="v">v74</i> % <i class="v">v72</i>;
                        <i class="f">BuildHuffmanTable_cold_4</i>(<i class="v">v74</i>, <i class="v">v78</i>, <i class="v">v90</i>, <i class="v">v81</i>, <i class="v">v82</i>, <i class="v">v71</i>, *(<i class="t">double</i>
                      }
                      <i class="v">v91</i> = <i class="v">v104</i> + 4LL * (<i class="v">v59</i> &gt;&gt; <i class="v">v80</i>);
                      <i class="v">v92</i> = <i class="v">a5</i>[<i class="v">v60</i>++];
                      <i class="v">v93</i> = <i class="v">v111</i> + (<i class="v">v92</i> &lt;&lt; 16);
                      <i class="v">v94</i> = <i class="v">v74</i>;
                      do
                      {
                        <i class="f">LODWORD</i>(<i class="v">v74</i>) = <i class="v">v74</i> - <i class="v">v72</i>;
                        *(<i class="t">_DWORD</i> *)(<i class="v">v91</i> + 4LL * (<i class="t">int</i>)<i class="v">v74</i>) = <i class="v">v93</i>;
                      }
                      while ( (<i class="t">int</i>)<i class="v">v74</i> &gt; 0 );
                      <i class="v">v95</i> = <i class="v">v82</i>;
                      do
                      {
                        <i class="v">v96</i> = <i class="v">v95</i>;
                        <i class="v">v95</i> &gt;&gt;= 1;
                      }
                      while ( (<i class="v">v59</i> &amp; <i class="v">v96</i>) != 0 );
                      if ( <i class="v">v96</i> )
                        <i class="v">v59</i> = <i class="v">v96</i> + (<i class="v">v59</i> &amp; (<i class="v">v96</i> - 1));</pre></div><div class="ab" style="left:527.5px;top:67.6px;width:9.2px;height:516px;background:#fafafa;border-left:1px solid #f2f2f2"></div><div class="ab" style="left:529.7px;top:438.0px;width:4.8px;height:64.6px;border-radius:2.4px;background:#7e7e7e"></div><div class="ab" style="left:139.0px;top:573px;width:388.1px;height:9.6px;background:linear-gradient(#e6e6e6,#bebebe);border-top:1px solid #a8a8a8"></div><div class="ab st" style="left:140.8px;top:574.5px">001CC818 _BuildHuffmanTable:345 (7FF80A438818)</div><div class="ab" style="left:138.0px;top:573px;width:1px;height:19px;background:#d0d0d0"></div><div class="ab" style="left:139.0px;top:583.4px;width:388.1px;height:8.6px;background:#fafafa"></div><div class="ab" style="left:140.8px;top:585.6px;width:296.8px;height:4.6px;border-radius:2.3px;background:#7e7e7e"></div><div class="ab" style="left:0;top:592px;width:100%;height:15px;background:linear-gradient(#e2e2e2,#bcbcbc);border-top:1px solid #a6a6a6"></div><pre class="ab sb" style="left:1px;top:595.2px">AU:  idle   Down      Disk: 35GB</pre></div></div></div>
<div class="win" style="left:543.5px;width:536.5px"><div class="blur ab" style="left:-4px;top:-4px;width:544.5px;height:615px"><div class="ab" style="left:4px;top:4px;width:536.5px;height:607px"><div class="ab tbar" style="left:0;top:0;width:100%;height:19px"></div><div class="ab" style="left:4.0px;top:4.4px;width:1.1px;height:1.3px;background:#b0b0b0"></div><div class="ab" style="left:4.0px;top:7.8px;width:1.1px;height:1.3px;background:#b0b0b0"></div><div class="ab" style="left:4.0px;top:11.2px;width:1.1px;height:1.3px;background:#b0b0b0"></div><div class="ab" style="left:43.0px;top:4.4px;width:1.1px;height:1.3px;background:#b0b0b0"></div><div class="ab" style="left:43.0px;top:7.8px;width:1.1px;height:1.3px;background:#b0b0b0"></div><div class="ab" style="left:43.0px;top:11.2px;width:1.1px;height:1.3px;background:#b0b0b0"></div><div class="ab" style="left:92.0px;top:4.4px;width:1.1px;height:1.3px;background:#b0b0b0"></div><div class="ab" style="left:92.0px;top:7.8px;width:1.1px;height:1.3px;background:#b0b0b0"></div><div class="ab" style="left:92.0px;top:11.2px;width:1.1px;height:1.3px;background:#b0b0b0"></div><div class="ab" style="left:219.5px;top:4.4px;width:1.1px;height:1.3px;background:#b0b0b0"></div><div class="ab" style="left:219.5px;top:7.8px;width:1.1px;height:1.3px;background:#b0b0b0"></div><div class="ab" style="left:219.5px;top:11.2px;width:1.1px;height:1.3px;background:#b0b0b0"></div><div class="ab" style="left:258.5px;top:4.4px;width:1.1px;height:1.3px;background:#b0b0b0"></div><div class="ab" style="left:258.5px;top:7.8px;width:1.1px;height:1.3px;background:#b0b0b0"></div><div class="ab" style="left:258.5px;top:11.2px;width:1.1px;height:1.3px;background:#b0b0b0"></div><div class="ab" style="left:387.5px;top:4.4px;width:1.1px;height:1.3px;background:#b0b0b0"></div><div class="ab" style="left:387.5px;top:7.8px;width:1.1px;height:1.3px;background:#b0b0b0"></div><div class="ab" style="left:387.5px;top:11.2px;width:1.1px;height:1.3px;background:#b0b0b0"></div><div class="ab" style="left:505.0px;top:4.4px;width:1.1px;height:1.3px;background:#b0b0b0"></div><div class="ab" style="left:505.0px;top:7.8px;width:1.1px;height:1.3px;background:#b0b0b0"></div><div class="ab" style="left:505.0px;top:11.2px;width:1.1px;height:1.3px;background:#b0b0b0"></div><div class="ab" style="left:146.4px;top:1.2px;width:1px;height:15.6px;background:repeating-linear-gradient(#c2c2c2 0 1.1px,transparent 1.1px 2.2px)"></div><div class="ab" style="left:168.8px;top:1.2px;width:1px;height:15.6px;background:repeating-linear-gradient(#c2c2c2 0 1.1px,transparent 1.1px 2.2px)"></div><div class="ab" style="left:191.6px;top:1.2px;width:1px;height:15.6px;background:repeating-linear-gradient(#c2c2c2 0 1.1px,transparent 1.1px 2.2px)"></div><svg class="ab" style="left:8.0px;top:4.0px" width="12" height="12" viewBox="0 0 12 12"><path d="M1.5 5.2h3l1 1h4.8v4.6h-8.8z" fill="#f0c030" stroke="#c89a10" stroke-width=".5"/><path d="M6 3.5l3-2 1.5 1.8-2.5 2z" fill="#4a78c8"/><path d="M1.5 10.8l1.6-3.6h8l-1.5 3.6z" fill="#ffdc50" stroke="#d0a010" stroke-width=".4"/></svg><svg class="ab" style="left:25.0px;top:4.0px" width="12" height="12" viewBox="0 0 12 12"><rect x="1.8" y="1.8" width="8.6" height="8.6" rx=".8" fill="#6a1ed0"/><rect x="3.4" y="2.2" width="5.4" height="3.4" fill="#e8d8ff"/><rect x="4" y="7.4" width="4.2" height="3" fill="#d0c0f0"/><rect x="6.4" y="7.9" width="1.2" height="2.1" fill="#5018a8"/></svg><svg class="ab" style="left:49.0px;top:4.0px" width="12" height="12" viewBox="0 0 12 12"><path d="M1.8 5.600l3.600-3.200v1.900h4.600v2.600h-4.600v1.900z" fill="#8f8fe0"/></svg><svg class="ab" style="left:71.0px;top:4.0px" width="12" height="12" viewBox="0 0 12 12"><path d="M10.2 5.600l-3.600-3.200v1.900h-4.600v2.600h4.600v1.900z" fill="#9a9ae8"/></svg><div class="ab tri" style="left:60.5px;top:11px;border-top-color:#b0b0b0"></div><div class="ab tri" style="left:82.5px;top:11px;border-top-color:#b0b0b0"></div><svg class="ab" style="left:96.0px;top:4.0px" width="12" height="12" viewBox="0 0 12 12"><path d="M1.400 7.200V4.200Q1.400 2 3 2T4.600 3.400L5 3.400Q5.200 2 6.600 2T8 4.200V7.200H5.400V5.600H4.200V7.200Z" fill="#3f60c4"/><path d="M2 3.600Q2.200 2.600 3 2.600M5.800 3.600Q6 2.600 6.800 2.600" stroke="#8fb0f0" stroke-width=".7" fill="none"/><rect x="4.900" y="5.300" width="6" height="5.700" fill="#dde6f4" stroke="#7892c4" stroke-width=".7"/><path d="M6.400 7.300h3M6.400 8.900h3" stroke="#5a78b8" stroke-width=".7"/></svg><svg class="ab" style="left:113.0px;top:4.0px" width="12" height="12" viewBox="0 0 12 12"><path d="M1.400 7.200V4.200Q1.400 2 3 2T4.600 3.400L5 3.400Q5.200 2 6.600 2T8 4.200V7.200H5.400V5.600H4.200V7.200Z" fill="#3f60c4"/><path d="M2 3.600Q2.200 2.600 3 2.600M5.800 3.600Q6 2.600 6.800 2.600" stroke="#8fb0f0" stroke-width=".7" fill="none"/><rect x="4.900" y="5.300" width="6" height="5.700" fill="#dde6f4" stroke="#7892c4" stroke-width=".7"/><path d="M7.900 6.600v3.200" stroke="#4a68b0" stroke-width="1"/></svg><svg class="ab" style="left:130.0px;top:4.0px" width="12" height="12" viewBox="0 0 12 12"><path d="M1.400 7.200V4.200Q1.400 2 3 2T4.600 3.400L5 3.400Q5.200 2 6.600 2T8 4.200V7.200H5.400V5.600H4.200V7.200Z" fill="#3f60c4"/><path d="M2 3.600Q2.200 2.600 3 2.600M5.800 3.600Q6 2.600 6.800 2.600" stroke="#8fb0f0" stroke-width=".7" fill="none"/><rect x="4.900" y="5.300" width="6" height="5.700" fill="#dde6f4" stroke="#7892c4" stroke-width=".7"/><path d="M6.200 7.300h3.400M6.200 8.900h3.400M7.900 6.400v3.400" stroke="#5a78b8" stroke-width=".6"/></svg><svg class="ab" style="left:152.0px;top:4.0px" width="12" height="12" viewBox="0 0 12 12"><rect x="1.6" y="2" width="6" height="5.4" fill="#b8c4e0" stroke="#90a0c8" stroke-width=".6"/><path d="M4.6 7.8h3.6v-1.7l2.6 2.6-2.6 2.6v-1.7h-3.6z" fill="#9aa8d8"/></svg><svg class="ab" style="left:174.5px;top:4.0px" width="12" height="12" viewBox="0 0 12 12"><path d="M2.800 1.200Q6.800 1 7.200 5.600H9.400L6.200 10.400 3 5.600H5Q5 3 2.800 2.400Z" fill="#1464f2"/><path d="M3.200 1.600Q5.600 1.600 6.400 3.400" stroke="#5cc8f8" stroke-width=".8" fill="none"/></svg><svg class="ab" style="left:199.0px;top:4.0px" width="12" height="12" viewBox="0 0 12 12"><rect x="1.4" y="1.6" width="9.2" height="8.8" fill="#f0ee9a" stroke="#a4a4b8" stroke-width=".9"/><text x="6" y="9" font-family="Liberation Sans,sans-serif" font-size="7.6" font-weight="700" text-anchor="middle" fill="#7c7cb0">A</text></svg><div class="ab tri" style="left:210.5px;top:11px;border-top-color:#b0b0b0"></div><svg class="ab" style="left:224.0px;top:4.0px" width="12" height="12" viewBox="0 0 12 12"><rect x="1.4" y="1.8" width="9.2" height="8.4" fill="#f4f4ff" stroke="#3a58b0" stroke-width=".8"/><rect x="1.4" y="1.8" width="9.2" height="1.8" fill="#3a58b0"/><path d="M6 4.4l3 4.8h-6z" fill="#e02020"/></svg><svg class="ab" style="left:241.0px;top:4.0px" width="12" height="12" viewBox="0 0 12 12"><circle cx="6" cy="6" r="4.2" fill="#2ec82e"/><circle cx="4.9" cy="4.7" r="1.6" fill="#9af09a" opacity=".8"/></svg><svg class="ab" style="left:260px;top:0" width="145" height="19" viewBox="260 0 145 19"><rect x="264.8" y="8.6" width="8.200" height="5.200" fill="#e4e8ec" stroke="#9aa4b0" stroke-width=".5"/><path d="M266.200 10v3M268 10v3M269.800 10v3M271.600 10v3" stroke="#56606c" stroke-width=".8"/><path d="M271.0 4.7v5.400M268.3 7.4h5.400" stroke="#55a755" stroke-width="1.9"/><rect x="281.2" y="8.8" width="8.800" height="5.200" rx=".6" fill="#7c8cdc"/><rect x="282.6" y="10.2" width="6" height="2.600" fill="#c4ccf4"/><path d="M287.8 4.7v5.400M285.1 7.4h5.400" stroke="#55a755" stroke-width="1.9"/><rect x="298.4" y="7.2" width="6" height="6.600" fill="#eef0f8" stroke="#b4b8cc" stroke-width=".5"/><path d="M299.800 13l1.600-4.200 1.600 4.200M300.400 11.600h2" fill="none" stroke="#5a78c0" stroke-width=".8"/><path d="M304.8 4.7v5.400M302.1 7.4h5.400" stroke="#55a755" stroke-width="1.9"/><path d="M317.400 10.600l3 2.400 3-3.400M320.400 13l.4 1.200" fill="none" stroke="#9ccc8c" stroke-width="1.200"/><circle cx="317.600" cy="10.600" r="1" fill="#9ccc8c"/><circle cx="320.600" cy="13.200" r="1.100" fill="#9ccc8c"/><path d="M323.8 4.7v5.400M321.1 7.4h5.400" stroke="#55a755" stroke-width="1.9"/><path d="M340 7.600l1 2.100 2.300-.2-1.300 1.900 1.300 1.900-2.300-.2-1 2.100-1-2.100-2.300.2 1.300-1.900-1.300-1.900 2.300.2z" fill="#8c88e4"/><path d="M343.6 4.7v5.400M340.9 7.4h5.400" stroke="#459a4c" stroke-width="1.9"/><rect x="353.8" y="8.4" width="9" height="5.600" rx=".6" fill="#7480d4"/><rect x="355" y="11.4" width="6.600" height="1.800" fill="#5a64c0"/><path d="M356.400 12.200l4.600-6 1.300 1-4.600 6-1.700.6z" fill="#f0bc58"/><path d="M361 6.200l.8-1 1.300 1-.8 1z" fill="#8ad0e8"/><path d="M371.400 5.200l8.400 8.400M379.800 5.200l-8.400 8.400" stroke="#e26a6a" stroke-width="1.700"/><path d="M394.600 6.400l6 3.500-6 3.500z" fill="#5cba70"/></svg><div class="ab tri" style="left:327.400px;top:11px;border-top-color:#b4b4b4"></div><svg class="ab" style="left:407.5px;top:4.0px" width="12" height="12" viewBox="0 0 12 12"><rect x="2" y="2" width="8" height="8" rx="1.2" fill="#7686e0"/><rect x="4" y="3.800" width="1.300" height="4.400" fill="#e8ecff"/><rect x="6.700" y="3.800" width="1.300" height="4.400" fill="#e8ecff"/></svg><svg class="ab" style="left:424.0px;top:4.0px" width="12" height="12" viewBox="0 0 12 12"><rect x="2" y="2" width="8" height="8" rx="1.2" fill="#7686e0"/><rect x="4" y="4" width="4" height="4" fill="#eef0ff"/></svg><div class="ab dd" style="left:442.8px;top:3.3px;width:39.8px;height:10.6px"><span style="position:absolute;left:4.6px;top:0;line-height:10.8px;font-size:7.5px;color:#3a3a3a">No deb</span><svg class="ab" style="left:29.6px;top:0.8px" width="9.2" height="9.0" viewBox="0 0 10 10"><path d="M3 4L5 2 7 4M3 6.200L5 8.200 7 6.200" fill="none" stroke="#3c3c3c" stroke-width="1.300"/></svg></div><svg class="ab" style="left:490.6px;top:6.6px" width="8" height="6" viewBox="0 0 8 6"><path d="M.8.600L3.400 3 .8 5.400M4.200.6L6.800 3 4.200 5.400" fill="none" stroke="#3c3c3c" stroke-width="1"/></svg><svg class="ab" style="left:526.2px;top:4.8px" width="8" height="6" viewBox="0 0 8 6"><path d="M.8.600L3.400 3 .8 5.400M4.200.6L6.800 3 4.200 5.400" fill="none" stroke="#3c3c3c" stroke-width="1"/></svg><svg class="ab" style="left:509.0px;top:4.0px" width="12" height="12" viewBox="0 0 12 12"><rect x="1.4" y="2.4" width="9" height="8.4" fill="#dce6fa" stroke="#4a68b8" stroke-width=".8"/><rect x="1.4" y="2.4" width="9" height="1.8" fill="#4a68b8"/><rect x="3" y="5.6" width="2.4" height="3.8" fill="#7a94d8"/><circle cx="8" cy="3" r="1.7" fill="#e02828"/><path d="M8 4.6v4" stroke="#e02828" stroke-width=".8"/></svg><div class="ab" style="left:4px;top:23px;width:1.1px;height:27px;background:repeating-linear-gradient(#b0b0b0 0 1.3px,transparent 1.3px 3.4px)"></div><div class="ab" style="left:10px;top:23px;font-size:0"><svg width="6" height="14" viewBox="0 0 6 14"><path d="M4.600 0v5.600L.4 2.800z" fill="#858585"/><path d="M.4 7.200v5.800L5 10.100z" fill="#111"/></svg></div><div class="ab" style="left:21.8px;top:21.9px;width:401.4px;height:14.8px;background:#00a2e8;overflow:hidden"><div class="ab" style="left:12.9px;top:0;width:0.8px;height:14.8px;background:#6a8a98"></div><div class="ab" style="left:28.2px;top:0;width:0.8px;height:14.8px;background:#6a8a98"></div><div class="ab" style="left:42.9px;top:0;width:0.8px;height:14.8px;background:#6a8a98"></div><div class="ab" style="left:51.5px;top:0;width:0.8px;height:14.8px;background:#6a8a98"></div><div class="ab" style="left:54.9px;top:0;width:0.8px;height:14.8px;background:#6a8a98"></div><div class="ab" style="left:109.9px;top:0;width:0.8px;height:14.8px;background:#6a8a98"></div><div class="ab" style="left:122.9px;top:0;width:0.8px;height:14.8px;background:#6a8a98"></div><div class="ab" style="left:175.5px;top:0;width:0.8px;height:14.8px;background:#6a8a98"></div><div class="ab" style="left:178.5px;top:0;width:0.8px;height:14.8px;background:#7ac8ec"></div><div class="ab" style="left:181.9px;top:0;width:1.0px;height:14.8px;background:#a87858"></div><div class="ab" style="left:197.3px;top:0;width:0.8px;height:14.8px;background:#6a8a98"></div><div class="ab" style="left:200.9px;top:0;width:0.8px;height:14.8px;background:#6a8a98"></div><div class="ab" style="left:212.1px;top:0;width:1.0px;height:14.8px;background:#a87858"></div><div class="ab" style="left:224.5px;top:0;width:0.8px;height:14.8px;background:#7ac8ec"></div><div class="ab" style="left:227.9px;top:0;width:1.0px;height:14.8px;background:#a87858"></div><div class="ab" style="left:241.9px;top:0;width:0.8px;height:14.8px;background:#6a8a98"></div><div class="ab" style="left:246.5px;top:0;width:1.0px;height:14.8px;background:#c06040"></div><div class="ab" style="left:252.9px;top:0;width:0.8px;height:14.8px;background:#6a8a98"></div><div class="ab" style="left:278.1px;top:0;width:0.8px;height:14.8px;background:#7ac8ec"></div><div class="ab" style="left:373.5px;top:0;width:0.8px;height:14.8px;background:#7ac8ec"></div><div class="ab" style="left:376.5px;top:0;width:0.8px;height:14.8px;background:#7ac8ec"></div><div class="ab" style="left:380.3px;top:0;width:0.8px;height:14.8px;background:#6a8a98"></div><div class="ab" style="left:387.8px;top:0;width:13.6px;height:14.8px;background:#b0ae6a"></div><div class="ab" style="left:257.6px;top:1px;width:1.4px;height:5.6px;background:#f4f060"></div></div><div class="ab" style="left:20.8px;top:21.9px;width:1px;height:14.8px;background:#b8b8b8"></div><div class="ab" style="left:431px;top:23px;font-size:0"><svg width="6" height="14" viewBox="0 0 6 14"><path d="M.4 0v5.800l4.600-2.900z" fill="#111"/><path d="M5 7.600v5.600L.6 10.400z" fill="#858585"/></svg></div><div class="ab dd" style="left:444.4px;top:23.2px;width:88.4px;height:11.3px"><svg class="ab" style="left:78.4px;top:1.1px" width="9.2" height="9.0" viewBox="0 0 10 10"><path d="M3 4L5 2 7 4M3 6.200L5 8.200 7 6.200" fill="none" stroke="#3c3c3c" stroke-width="1.300"/></svg></div><div class="ab" style="left:7.8px;top:44.4px;width:9.1px;height:8.9px;background:#aefcff"></div><div class="ab lg" style="left:22.7px;top:43.6px">Library function</div><div class="ab" style="left:80.8px;top:44.4px;width:9.1px;height:8.9px;background:#00a2e8"></div><div class="ab lg" style="left:95.6px;top:43.6px">Regular function</div><div class="ab" style="left:156.3px;top:44.4px;width:9.1px;height:8.9px;background:#b8785a"></div><div class="ab lg" style="left:171.0px;top:43.6px">Instruction</div><div class="ab" style="left:211.8px;top:44.4px;width:9.1px;height:8.9px;background:#c0c0c0"></div><div class="ab lg" style="left:227.2px;top:43.6px">Data</div><div class="ab" style="left:247.6px;top:44.4px;width:9.1px;height:8.9px;background:#b0ae6a"></div><div class="ab lg" style="left:262.4px;top:43.6px">Unexplored</div><div class="ab" style="left:306.0px;top:44.4px;width:9.1px;height:8.9px;background:#ff9cf8"></div><div class="ab lg" style="left:321.0px;top:43.6px">External symbol</div><div class="ab" style="left:379.8px;top:44.4px;width:9.1px;height:8.9px;background:#32cc32"></div><div class="ab lg" style="left:394.8px;top:43.6px">Lumina function</div><div class="ab" style="left:0;top:54.6px;width:100%;height:1px;background:#c4c4c4"></div><div class="ab" style="left:0;top:55.6px;width:110.8px;height:536.4px;background:#ececec"></div><div class="ab" style="left:1px;top:56px;width:109.8px;height:16px;background:#ebebeb"></div><svg class="ab" style="left:2.3px;top:59.3px" width="9.4" height="9.4" viewBox="0 0 10 10" preserveAspectRatio="none"><rect x=".5" y=".5" width="9" height="9" fill="#e6f6ff" stroke="#8fa8ee" stroke-width="1"/><rect x=".4" y=".2" width="9.200" height="1.700" fill="url(#fg)"/><text x="5.2" y="7.700" text-anchor="middle" font-family="DejaVu Serif,Liberation Serif,serif" font-style="italic" font-size="6.800" fill="#2c3858">f</text></svg><div class="ab ui" style="left:15.9px;top:58.3px;font-size:7.8px;line-height:11px;color:#262626">Functions</div><svg class="ab" style="left:65.5px;top:60.6px" width="8.6" height="8.6" viewBox="0 0 8 8"><circle cx="4" cy="4" r="3.85" fill="#444"/><rect x="2.6" y="3" width="2.8" height="2" fill="none" stroke="#c8c8c8" stroke-width=".7"/></svg><svg class="ab" style="left:82.5px;top:60.6px" width="8.6" height="8.6" viewBox="0 0 8 8"><circle cx="4" cy="4" r="3.85" fill="#444"/><circle cx="4" cy="4.2" r="1.3" fill="none" stroke="#c0c0c0" stroke-width=".7"/></svg><svg class="ab" style="left:99.5px;top:60.6px" width="8.6" height="8.6" viewBox="0 0 8 8"><circle cx="4" cy="4" r="3.85" fill="#444"/><path d="M2.6 2.6L5.4 5.4M5.4 2.6L2.6 5.4" stroke="#f4f4f4" stroke-width="1.1"/></svg><div class="ab" style="left:1px;top:72.4px;width:109.8px;height:13.6px;background:#f0f0f0;border-top:1.2px solid #cdcdcd"></div><div class="ab ui" style="left:2.8px;top:75px;font-size:7px;letter-spacing:-.2px;line-height:10px;color:#4a4a4a">Function name</div><div class="ab" style="left:1px;top:86px;width:109.8px;height:397px;background:#fff;overflow:hidden"><svg class="ab" style="left:2.2px;top:0.8px" width="9.2" height="8.6" viewBox="0 0 10 10" preserveAspectRatio="none"><rect x=".5" y=".5" width="9" height="9" fill="#e6f6ff" stroke="#8fa8ee" stroke-width="1"/><rect x=".4" y=".2" width="9.200" height="1.700" fill="url(#fg)"/><text x="5.2" y="7.700" text-anchor="middle" font-family="DejaVu Serif,Liberation Serif,serif" font-style="italic" font-size="6.800" fill="#2c3858">f</text></svg><div class="ab fn" style="left:14.9px;top:0.50px">_VP8L<b style="background:#ffff30">BuildHuff</b>manTable</div><div class="ab" style="left:0;top:10.12px;width:100%;height:10.1px;background:#dcdcdc"></div><svg class="ab" style="left:2.2px;top:10.9px" width="9.2" height="8.6" viewBox="0 0 10 10" preserveAspectRatio="none"><rect x=".5" y=".5" width="9" height="9" fill="#e6f6ff" stroke="#8fa8ee" stroke-width="1"/><rect x=".4" y=".2" width="9.200" height="1.700" fill="url(#fg)"/><text x="5.2" y="7.700" text-anchor="middle" font-family="DejaVu Serif,Liberation Serif,serif" font-style="italic" font-size="6.800" fill="#2c3858">f</text></svg><div class="ab fn" style="left:14.9px;top:10.62px">_<b style="background:#28c8c8">BuildHuff</b>manTable</div><svg class="ab" style="left:2.2px;top:21.1px" width="9.2" height="8.6" viewBox="0 0 10 10" preserveAspectRatio="none"><rect x=".5" y=".5" width="9" height="9" fill="#e6f6ff" stroke="#8fa8ee" stroke-width="1"/><rect x=".4" y=".2" width="9.200" height="1.700" fill="url(#fg)"/><text x="5.2" y="7.700" text-anchor="middle" font-family="DejaVu Serif,Liberation Serif,serif" font-style="italic" font-size="6.800" fill="#2c3858">f</text></svg><div class="ab fn" style="left:14.9px;top:20.75px">_VP8L<b style="background:#ffff30">BuildHuff</b>manTable_cold_1</div><svg class="ab" style="left:2.2px;top:31.2px" width="9.2" height="8.6" viewBox="0 0 10 10" preserveAspectRatio="none"><rect x=".5" y=".5" width="9" height="9" fill="#e6f6ff" stroke="#8fa8ee" stroke-width="1"/><rect x=".4" y=".2" width="9.200" height="1.700" fill="url(#fg)"/><text x="5.2" y="7.700" text-anchor="middle" font-family="DejaVu Serif,Liberation Serif,serif" font-style="italic" font-size="6.800" fill="#2c3858">f</text></svg><div class="ab fn" style="left:14.9px;top:30.88px">_<b style="background:#ffff30">BuildHuff</b>manTable_cold_1</div><svg class="ab" style="left:2.2px;top:41.3px" width="9.2" height="8.6" viewBox="0 0 10 10" preserveAspectRatio="none"><rect x=".5" y=".5" width="9" height="9" fill="#e6f6ff" stroke="#8fa8ee" stroke-width="1"/><rect x=".4" y=".2" width="9.200" height="1.700" fill="url(#fg)"/><text x="5.2" y="7.700" text-anchor="middle" font-family="DejaVu Serif,Liberation Serif,serif" font-style="italic" font-size="6.800" fill="#2c3858">f</text></svg><div class="ab fn" style="left:14.9px;top:41.00px">_<b style="background:#ffff30">BuildHuff</b>manTable_cold_2</div><svg class="ab" style="left:2.2px;top:51.4px" width="9.2" height="8.6" viewBox="0 0 10 10" preserveAspectRatio="none"><rect x=".5" y=".5" width="9" height="9" fill="#e6f6ff" stroke="#8fa8ee" stroke-width="1"/><rect x=".4" y=".2" width="9.200" height="1.700" fill="url(#fg)"/><text x="5.2" y="7.700" text-anchor="middle" font-family="DejaVu Serif,Liberation Serif,serif" font-style="italic" font-size="6.800" fill="#2c3858">f</text></svg><div class="ab fn" style="left:14.9px;top:51.12px">_<b style="background:#ffff30">BuildHuff</b>manTable_cold_3</div><svg class="ab" style="left:2.2px;top:61.5px" width="9.2" height="8.6" viewBox="0 0 10 10" preserveAspectRatio="none"><rect x=".5" y=".5" width="9" height="9" fill="#e6f6ff" stroke="#8fa8ee" stroke-width="1"/><rect x=".4" y=".2" width="9.200" height="1.700" fill="url(#fg)"/><text x="5.2" y="7.700" text-anchor="middle" font-family="DejaVu Serif,Liberation Serif,serif" font-style="italic" font-size="6.800" fill="#2c3858">f</text></svg><div class="ab fn" style="left:14.9px;top:61.25px">_<b style="background:#ffff30">BuildHuff</b>manTable_cold_4</div><svg class="ab" style="left:2.2px;top:71.7px" width="9.2" height="8.6" viewBox="0 0 10 10" preserveAspectRatio="none"><rect x=".5" y=".5" width="9" height="9" fill="#e6f6ff" stroke="#8fa8ee" stroke-width="1"/><rect x=".4" y=".2" width="9.200" height="1.700" fill="url(#fg)"/><text x="5.2" y="7.700" text-anchor="middle" font-family="DejaVu Serif,Liberation Serif,serif" font-style="italic" font-size="6.800" fill="#2c3858">f</text></svg><div class="ab fn" style="left:14.9px;top:71.38px">_<b style="background:#ffff30">BuildHuff</b>manTable_cold_5</div><svg class="ab" style="left:2.2px;top:81.8px" width="9.2" height="8.6" viewBox="0 0 10 10" preserveAspectRatio="none"><rect x=".5" y=".5" width="9" height="9" fill="#e6f6ff" stroke="#8fa8ee" stroke-width="1"/><rect x=".4" y=".2" width="9.200" height="1.700" fill="url(#fg)"/><text x="5.2" y="7.700" text-anchor="middle" font-family="DejaVu Serif,Liberation Serif,serif" font-style="italic" font-size="6.800" fill="#2c3858">f</text></svg><div class="ab fn" style="left:14.9px;top:81.50px">_<b style="background:#ffff30">BuildHuff</b>manTable_cold_6</div></div><div class="ab" style="left:1px;top:483px;width:109.8px;height:8.6px;background:#fafafa;border-top:1px solid #e8e8e8"></div><div class="ab" style="left:2.4px;top:485.4px;width:15.6px;height:4.6px;border-radius:2.3px;background:#8e8e8e"></div><div class="ab" style="left:1px;top:491.8px;width:109.8px;height:12.4px;background:#ececec;border-top:1px solid #c4c4c4"></div><svg class="ab" style="left:2.6px;top:494.8px" width="7" height="7" viewBox="0 0 8 8"><path d="M2 2l4 4M6 2L2 6" stroke="#2a6ae0" stroke-width="1.600"/><circle cx="1.800" cy="1.800" r="1.300" fill="#2a6ae0"/><circle cx="6.200" cy="1.800" r="1.300" fill="#2a6ae0"/><circle cx="1.800" cy="6.200" r="1.300" fill="#2a6ae0"/><circle cx="6.200" cy="6.200" r="1.300" fill="#2a6ae0"/></svg><div class="ab" style="left:13.4px;top:493px;width:97.4px;height:10.6px;background:#fff"></div><div class="ab ui" style="left:18.6px;top:493.6px;font-size:7.8px;line-height:10px;color:#222">BuildHuff</div><div class="ab" style="left:0;top:504.4px;width:111.8px;height:11.6px;background:linear-gradient(#e6e6e6,#bebebe);border-top:1px solid #b4b4b4"></div><div class="ab ui" style="left:3.6px;top:505.2px;font-size:7.3px;line-height:10px;color:#333">Line 2 of 9</div><div class="ab" style="left:1px;top:518.6px;width:109.8px;height:15.2px;background:#ebebeb;border-bottom:1px solid #c8c8c8;border-top:1px solid #d8d8d8"></div><svg class="ab" style="left:2.6px;top:521.6px" width="10" height="9" viewBox="0 0 10 9"><rect x="3.6" y=".4" width="2.8" height="2.6" fill="#2a6ae0"/><rect x=".4" y="5.6" width="2.6" height="2.8" fill="#2a6ae0"/><rect x="3.7" y="5.6" width="2.6" height="2.8" fill="#2a6ae0"/><rect x="7" y="5.6" width="2.6" height="2.8" fill="#2a6ae0"/><path d="M5 3v1.4M1.7 5.6V4.4h6.6v1.2M5 4.4v1.2" stroke="#2a6ae0" stroke-width=".8" fill="none"/></svg><div class="ab ui" style="left:16.0px;top:520.8px;width:45.0px;overflow:hidden;white-space:nowrap;font-size:7.9px;line-height:11px;color:#262626">Graph overview</div><svg class="ab" style="left:65.5px;top:522.7px" width="8.6" height="8.6" viewBox="0 0 8 8"><circle cx="4" cy="4" r="3.85" fill="#444"/><rect x="2.6" y="3" width="2.8" height="2" fill="none" stroke="#c8c8c8" stroke-width=".7"/></svg><svg class="ab" style="left:82.5px;top:522.7px" width="8.6" height="8.6" viewBox="0 0 8 8"><circle cx="4" cy="4" r="3.85" fill="#444"/><circle cx="4" cy="4.2" r="1.3" fill="none" stroke="#c0c0c0" stroke-width=".7"/></svg><svg class="ab" style="left:99.5px;top:522.7px" width="8.6" height="8.6" viewBox="0 0 8 8"><circle cx="4" cy="4" r="3.85" fill="#444"/><path d="M2.6 2.6L5.4 5.4M5.4 2.6L2.6 5.4" stroke="#f4f4f4" stroke-width="1.1"/></svg><div class="ab" style="left:1px;top:534.8px;width:109.8px;height:57.2px;background:linear-gradient(#ffffff,#d4f3fc)"></div><svg class="ab" style="left:31.5px;top:530px" width="60" height="62" viewBox="575 530 60 62"><rect x="594" y="545.8" width="10.200" height="41.400" fill="none" stroke="#3ea63e" stroke-width="1.6"/><path d="M594 552h10M594 565.5h10M594 584.600h10" stroke="#3ea63e" stroke-width="1.2"/><path d="M594.600 553v32" stroke="#ee7070" stroke-width=".8"/><path d="M602 541l-5.500 8-1.500 2 3 3-2 4 1 5 6 3v2l-5 4 1 5 2 5-1 4" fill="none" stroke="#141414" stroke-width="1.6" stroke-dasharray="3.2 .7"/><rect x="601.2" y="536.8" width="5" height="3.800" fill="#fff" stroke="#2a2a2a" stroke-width=".8"/><path d="M594 588.600h10.400" stroke="#2a36e4" stroke-width="2"/><path d="M597.600 589.400h4.600l-2.300 2.800z" fill="#0c0c0c"/></svg><div class="ab" style="left:114.2px;top:55.6px;width:422.3px;height:536.4px;background:#fff"></div><div class="ab" style="left:114.2px;top:55.6px;width:422.3px;height:11.8px;background:#f1f1f1;border-bottom:1px solid #bdbdbd"></div><div class="ab" style="left:520.8px;top:55.6px;width:15.9px;height:11.4px;background:#e7e7e7"></div><div class="tab" style="left:115.4px;width:60.4px"><div class="ab" style="left:-1.4px;top:0"><svg class="tx" viewBox="0 0 6 6"><path d="M.8.8l4.400 4.400M5.200.8L.8 5.200"/></svg><svg class="ti" width="9" height="9" viewBox="0 0 9 9"><rect x=".6" y=".8" width="7.8" height="7.4" fill="#eef4ff" stroke="#4a78c8" stroke-width=".8"/><rect x="2" y="2.4" width="2" height="4.4" fill="#6a90d8"/><path d="M5 3h2.4M5 4.6h2.4M5 6.2h2.4" stroke="#6a90d8" stroke-width=".7"/></svg><span class="tl">IDA ...</span></div></div><div class="tab dim" style="left:176.2px;width:62.2px"><div class="ab" style="left:0.0px;top:0"><svg class="tx" viewBox="0 0 6 6"><path d="M.8.8l4.400 4.400M5.200.8L.8 5.200"/></svg><svg class="ti" width="9" height="9" viewBox="0 0 9 9"><rect x=".6" y=".8" width="7.8" height="7.4" fill="#eef4ff" stroke="#4a78c8" stroke-width=".8"/><rect x="2" y="2.4" width="2" height="4.4" fill="#6a90d8"/><path d="M5 3h2.4M5 4.6h2.4M5 6.2h2.4" stroke="#6a90d8" stroke-width=".7"/></svg><span class="tl">Pseu...</span></div></div><div class="tab" style="left:239.4px;width:63.4px"><div class="ab" style="left:0.0px;top:0"><svg class="tx" viewBox="0 0 6 6"><path d="M.8.8l4.400 4.400M5.200.8L.8 5.200"/></svg><svg class="ti" width="9" height="9" viewBox="0 0 9 9"><rect x=".6" y=".8" width="7.8" height="7.4" rx="1" fill="#e4ecff" stroke="#3a68d8" stroke-width=".9"/><circle cx="4.5" cy="4.5" r="1.9" fill="none" stroke="#3a68d8" stroke-width=".8"/></svg><span class="tl">Hex ...</span></div></div><div class="tab" style="left:304.0px;width:61.6px"><div class="ab" style="left:0.0px;top:0"><svg class="tx" viewBox="0 0 6 6"><path d="M.8.8l4.400 4.400M5.200.8L.8 5.200"/></svg><svg class="ti" width="9" height="9" viewBox="0 0 9 9"><rect x=".6" y=".8" width="7.8" height="7.4" fill="#e8f0ff" stroke="#3a68c8" stroke-width=".9"/><path d="M2.6 7l1.9-5 1.9 5M3.3 5.4h2.4" fill="none" stroke="#2a3a80" stroke-width=".9"/></svg><span class="tl">Stru...</span></div></div><div class="tab" style="left:366.8px;width:62.4px"><div class="ab" style="left:0.0px;top:0"><svg class="tx" viewBox="0 0 6 6"><path d="M.8.8l4.400 4.400M5.200.8L.8 5.200"/></svg><svg class="ti" width="9" height="9" viewBox="0 0 9 9"><rect x=".6" y=".8" width="7.8" height="7.4" fill="#e8f0ff" stroke="#3a68c8" stroke-width=".9"/><path d="M2.2 3h1M4.2 3h2.6M2.2 4.6h1M4.2 4.6h2.6M2.2 6.2h1M4.2 6.2h2.6" stroke="#3a68c8" stroke-width=".8"/></svg><span class="tl">Enums</span></div></div><div class="tab" style="left:430.4px;width:61.0px"><div class="ab" style="left:0.0px;top:0"><svg class="tx" viewBox="0 0 6 6"><path d="M.8.8l4.400 4.400M5.200.8L.8 5.200"/></svg><svg class="ti" width="9" height="9" viewBox="0 0 9 9"><rect x=".6" y="1.6" width="7.8" height="6.8" fill="#dce6fa" stroke="#4a68b8" stroke-width=".8"/><path d="M2 2.6h3.4L4 .8z" fill="#38a838"/><path d="M2.4 3.4l2 2.4 1-1" stroke="#38a838" stroke-width="1.1" fill="none"/><rect x="4.6" y="5" width="2.6" height="2.6" fill="#4a68b8"/></svg><span class="tl">Imp...</span></div></div><div class="tab" style="left:493.4px;width:27.0px"><div class="ab" style="left:0.0px;top:0"><svg class="tx" viewBox="0 0 6 6"><path d="M.8.8l4.400 4.400M5.200.8L.8 5.200"/></svg><svg class="ti" width="9" height="9" viewBox="0 0 9 9"><rect x=".6" y="1.6" width="7.8" height="6.8" fill="#dce6fa" stroke="#4a68b8" stroke-width=".8"/><path d="M4 4.6l2.4-3 1.4 1.8z" fill="#38a838"/><rect x="2" y="5" width="2.6" height="2.6" fill="#4a68b8"/></svg><span class="tl"></span></div></div><div class="ab" style="left:114.8px;top:66.9px;width:421.7px;height:1.1px;background:#bcbcbc"></div><svg class="ab" style="left:520.6px;top:58px" width="16" height="8" viewBox="0 0 16 8"><path d="M5 1L2 4l3 3" fill="none" stroke="#b0b0b0" stroke-width="1.1"/><path d="M10.4 .8L13.6 4l-3.2 3.2" fill="none" stroke="#1a1a1a" stroke-width="1.4"/></svg><div class="ab" style="left:114.2px;top:67.6px;width:413.7px;height:505.4px;overflow:hidden"><div class="ab" style="left:28.3px;top:0;width:1.4px;height:100%;background:#dadada"></div><div class="ab" style="left:29.7px;top:207.4px;width:384.2px;height:63.4px;background:#bab5a9"></div><div class="ab" style="left:29.7px;top:270.8px;width:247.6px;height:8.8px;background:#aca79c"></div><div class="ab" style="left:277.3px;top:270.8px;width:136.6px;height:8.8px;background:#e4e4e4"></div><pre class="ab ln" style="left:11.9px;top:0.3px">348
349
350
351
352
353
354
355
356
357
358
359
360
361
362
363
364
365
366
367
368
369
370
371
372
373
374
375
376
377
378
379
380
381
382
383
384
385
386
387
388
389
390
391
392
393
394
395
396
397
398
399
400
401
402
403</pre><div class="dot" style="left:3.0px;top:2.3px"></div><div class="dot" style="left:3.0px;top:11.3px"></div><div class="dot" style="left:3.0px;top:20.3px"></div><div class="dot" style="left:3.0px;top:29.3px"></div><div class="dot" style="left:3.0px;top:47.3px"></div><div class="dot" style="left:3.0px;top:56.3px"></div><div class="dot" style="left:3.0px;top:83.3px"></div><div class="dot" style="left:3.0px;top:110.3px"></div><div class="dot" style="left:3.0px;top:119.3px"></div><div class="dot" style="left:3.0px;top:137.3px"></div><div class="dot" style="left:3.0px;top:146.3px"></div><div class="dot" style="left:3.0px;top:155.3px"></div><div class="dot" style="left:3.0px;top:164.3px"></div><div class="dot" style="left:3.0px;top:173.3px"></div><div class="dot" style="left:3.0px;top:182.3px"></div><div class="dot" style="left:3.0px;top:191.3px"></div><div class="dot" style="left:3.0px;top:209.3px"></div><div class="dot" style="left:3.0px;top:218.3px"></div><div class="dot" style="left:3.0px;top:227.3px"></div><div class="dot" style="left:3.0px;top:245.3px"></div><div class="dot" style="left:3.0px;top:254.3px"></div><div class="dot" style="left:3.0px;top:272.3px"></div><div class="dot" style="left:3.0px;top:281.3px"></div><div class="dot" style="left:3.0px;top:299.3px"></div><div class="dot" style="left:3.0px;top:308.3px"></div><div class="dot" style="left:3.0px;top:317.3px"></div><div class="dot" style="left:3.0px;top:335.3px"></div><div class="dot" style="left:3.0px;top:344.3px"></div><div class="dot" style="left:3.0px;top:353.3px"></div><div class="dot" style="left:3.0px;top:380.3px"></div><div class="dot" style="left:3.0px;top:389.3px"></div><div class="dot" style="left:3.0px;top:407.3px"></div><div class="dot" style="left:3.0px;top:416.3px"></div><div class="dot" style="left:3.0px;top:443.3px"></div><div class="dot" style="left:3.0px;top:452.3px"></div><div class="dot" style="left:3.0px;top:470.3px"></div><div class="dot" style="left:3.0px;top:479.3px"></div><div class="dot" style="left:3.0px;top:488.3px"></div><div class="dot" style="left:3.0px;top:497.3px"></div><pre class="ab cd" style="left:30.1px;top:0.3px">                          <i class="v">v89</i> = <i class="v">v87</i> + 1;
                          <i class="v">v73</i> = <i class="v">v88</i> &lt;= *(<i class="t">_DWORD</i> *)&amp;<i class="v">v81</i>[4 * <i class="v">v87</i>];
                          <i class="v">v86</i> = <i class="v">v88</i> - *(<i class="t">_DWORD</i> *)&amp;<i class="v">v81</i>[4 * <i class="v">v87</i>++];
                          if ( <i class="v">v73</i> )
                          {
                            <i class="v">v85</i> = <i class="v">v89</i> - <i class="v">v115</i>;
                            goto LABEL_61;
                          }
                        }
                        <i class="v">v85</i> = 15;
                      }
LABEL_61:
                      <i class="v">v84</i> = <i class="v">v85</i> - <i class="v">a2</i>;
                      <i class="v">v83</i> = 1 &lt;&lt; <i class="v">v84</i>;
                    }
                    <i class="v">v105</i> += <i class="v">v83</i>;
                    *(<i class="t">_BYTE</i> *)(<i class="v">a1</i> + 4LL * (<i class="t">unsigned int</i>)<i class="v">v82</i>) = <i class="v">a2</i> + <i class="v">v84</i>;
                    <i class="v">v103</i> += 4LL * (<i class="t">int</i>)<i class="v">v11</i>;
                    *(<i class="t">_WORD</i> *)(<i class="v">a1</i> + 4LL * (<i class="v">v114</i> &amp; <i class="v">v60</i>) + 2) = ((<i class="t">unsigned int</i>)(<i class="v">v103</i> - a
                    <i class="v">v81</i> = <i class="v">v107</i>;
                    <i class="f">LODWORD</i>(<i class="v">v11</i>) = <i class="v">v83</i>;
                    <i class="v">a6</i> = <i class="v">v118</i>;
                  }
<i class="p">                  v90 = v10[v61];</i>
<i class="p">                  v91 = v60 &gt;&gt; a2;</i>
<i class="p">                  if ( a6 )</i>
<i class="p">                  {</i>
<i class="p">                    if ( v103 + 4 * (v91 + (int)v11) &gt;= a6 )</i>
<i class="p">                      goto LABEL_77;</i>
<i class="p">                  }</i>
<i class="p">                  v92 = (unsigned int)((int)v11 &gt;&gt; 31);</i>
                  if ( (<i class="t">int</i>)<i class="v">v11</i> % <i class="v">v76</i> )
                  {
                    __asm { <i class="f">vzeroupper</i> }
                    <i class="f">LODWORD</i>(<i class="v">v92</i>) = (<i class="t">int</i>)<i class="v">v11</i> % <i class="v">v76</i>;
                    <i class="f">BuildHuffmanTable_cold_4</i>(<i class="v">v81</i>, <i class="v">v91</i>, <i class="v">v92</i>, <i class="v">v61</i>, <i class="v">v82</i>, *(<i class="t">double</i> *)&amp;<i class="v">_XMM</i>
                  }
                  ++<i class="v">v61</i>;
                  <i class="v">v93</i> = <i class="v">v109</i> + (<i class="v">v90</i> &lt;&lt; 16);
                  <i class="v">v94</i> = <i class="v">v11</i>;
                  do
                  {
                    <i class="v">v94</i> -= <i class="v">v76</i>;
                    *(<i class="t">_DWORD</i> *)(<i class="v">v103</i> + 4 * <i class="v">v91</i> + 4LL * <i class="v">v94</i>) = <i class="v">v93</i>;
                  }
                  while ( <i class="v">v94</i> &gt; 0 );
                  <i class="v">v95</i> = 1 &lt;&lt; <i class="v">v117</i>;
                  do
                  {
                    <i class="v">v96</i> = <i class="v">v95</i>;
                    <i class="v">v95</i> &gt;&gt;= 1;
                  }
                  while ( (<i class="v">v60</i> &amp; <i class="v">v96</i>) != 0 );
                  if ( <i class="v">v96</i> )
                    <i class="v">v60</i> = <i class="v">v96</i> + (<i class="v">v60</i> &amp; (<i class="v">v96</i> - 1));
                  <i class="v">v97</i> = <i class="v">v122</i>[0].i32[<i class="v">v104</i>];</pre></div><div class="ab" style="left:527.3px;top:67.6px;width:9.2px;height:516px;background:#fafafa;border-left:1px solid #f2f2f2"></div><div class="ab" style="left:529.5px;top:459.4px;width:4.8px;height:61.4px;border-radius:2.4px;background:#7e7e7e"></div><div class="ab" style="left:143.9px;top:573px;width:383.0px;height:9.6px;background:linear-gradient(#e6e6e6,#bebebe);border-top:1px solid #a8a8a8"></div><div class="ab st" style="left:145.5px;top:574.5px">001CC7DC _BuildHuffmanTable:378 (7FF80A4387DC)</div><div class="ab" style="left:142.9px;top:573px;width:1px;height:19px;background:#d0d0d0"></div><div class="ab" style="left:143.9px;top:583.4px;width:383.0px;height:8.6px;background:#fafafa"></div><div class="ab" style="left:145.1px;top:585.6px;width:148.4px;height:4.6px;border-radius:2.3px;background:#7e7e7e"></div><div class="ab" style="left:0;top:592px;width:100%;height:15px;background:linear-gradient(#e2e2e2,#bcbcbc);border-top:1px solid #a6a6a6"></div><pre class="ab sb" style="left:1px;top:595.2px">AU:  idle   Down      Disk: 35GB</pre></div></div></div>
<div class="ab" style="left:539.1px;top:285.8px;width:2.5px;height:36.2px;border-radius:1.25px;background:#808080;filter:blur(.3px)"></div>
<svg class="wm" viewBox="0 0 1080 607"><rect x="753.6" y="275.6" width="222.6" height="61.8" rx="3" fill="none" stroke="#f2382a" stroke-width="1.7"/><path d="M715.1 393.9L737.7 358.5 734.4 356.1 746.7 351.2 745.8 364.5 743.3 362.3 717.7 395.7Q716 397 715 395.600Q714.600 394.700 715.100 393.900z" fill="#fb2314"/></svg>
<svg class="wm" viewBox="0 0 1080 607"><defs><filter id="ws" x="-10%" y="-10%" width="120%" height="130%"><feDropShadow dx=".7" dy=".9" stdDeviation=".5" flood-color="#000" flood-opacity=".62"/></filter></defs><g filter="url(#ws)" fill="#fff" stroke="#c4c4c4" stroke-width=".4"><path d="M915.6 539.6c-8.6 0-15.2 5.6-15.2 12.8 0 4 2.1 7.4 5.6 9.8l-1.6 4.6 5.4-2.7c1.6.5 3 .8 4.6.9-.3-1-.4-2-.4-3 0-6.7 6.3-11.9 14.2-11.9.8 0 1.600 0 2.400.2-1.4-6.100-7.600-10.700-15-10.700z"/><path d="M942.2 562.2c0-6-5.800-10.800-12.800-10.800-7.200 0-12.900 4.800-12.900 10.800s5.700 10.800 12.900 10.800c1.500 0 3-.3 4.400-.7l4.200 2.300-1.200-3.800c3.200-2.200 5.400-5.200 5.400-8.600z"/></g><g fill="#9a9a9a"><circle cx="910.600" cy="548.600" r="1.5"/><circle cx="920.6" cy="548.6" r="1.5"/><circle cx="925.200" cy="559.400" r="1.300"/><circle cx="933.6" cy="559.4" r="1.3"/></g><text x="949.4" y="570.3" font-family='"Liberation Sans","Noto Sans CJK SC",sans-serif' font-size="27.2" font-weight="300" fill="#fff" stroke="#c8c8c8" stroke-width=".3" filter="url(#ws)">Ots安全</text></svg>
</body></html>
